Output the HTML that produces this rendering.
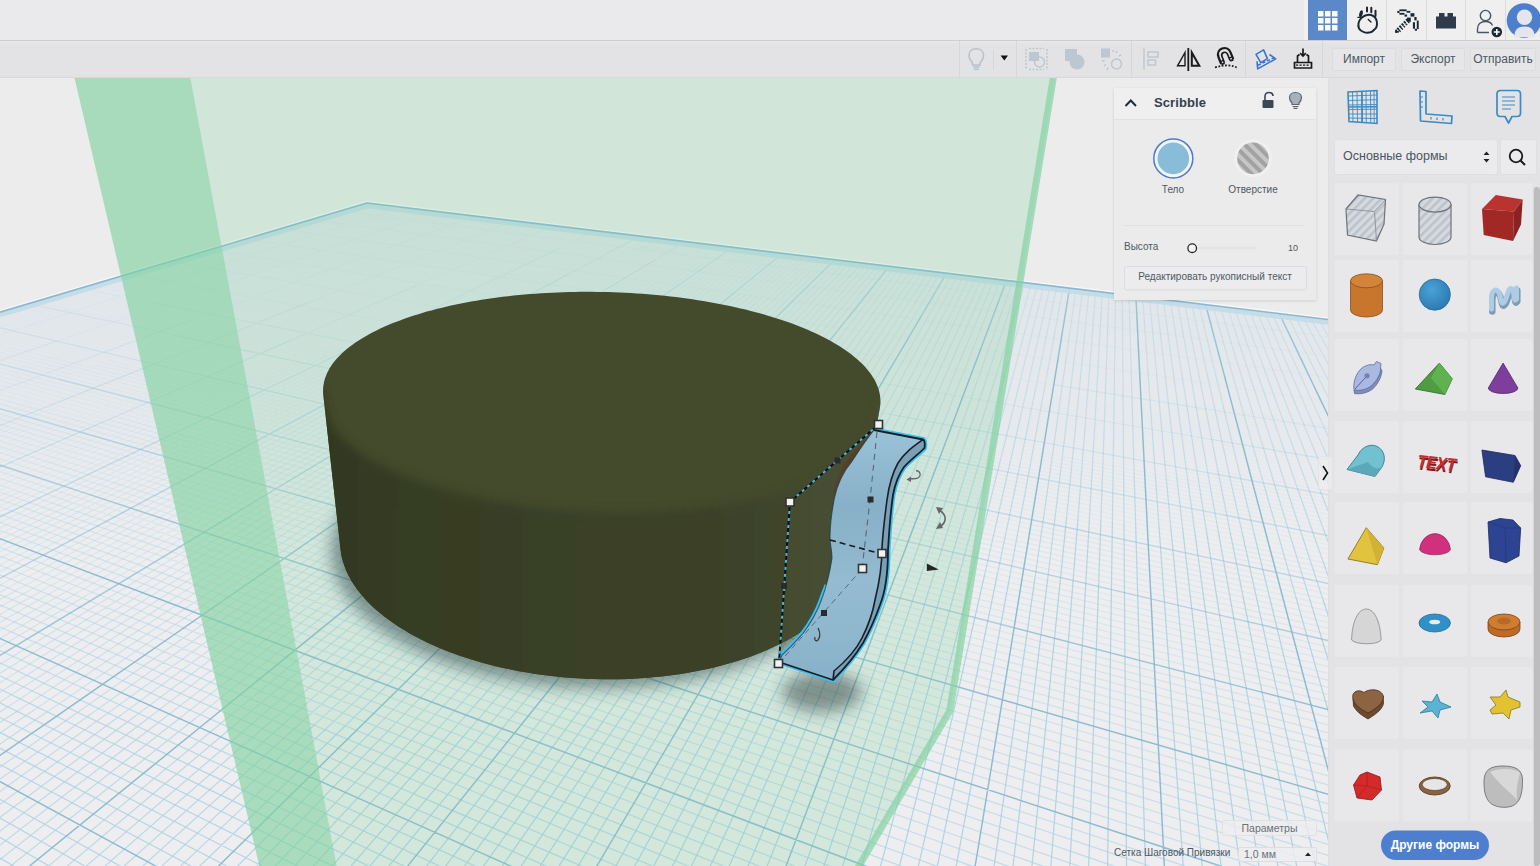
<!DOCTYPE html>
<html><head><meta charset="utf-8">
<style>
*{box-sizing:border-box;margin:0;padding:0}
html,body{width:1540px;height:866px;overflow:hidden;background:#ececec;font-family:"Liberation Sans",sans-serif}
#scene{position:absolute;left:0;top:0}
.abs{position:absolute}
#topbar{position:absolute;left:0;top:0;width:1540px;height:41px;background:#eaeaec;border-bottom:1px solid #cdced2}
#toolbar{position:absolute;left:0;top:41px;width:1540px;height:37px;background:#e3e3e5;box-shadow:inset 0 2px 0 #e7e7e9, inset 0 -1px 0 #d8d8dc}
#panel{position:absolute;left:1328px;top:78px;width:212px;height:788px;background:#e3e3e5}
.tsep{position:absolute;top:44px;width:1px;height:31px;background:#d6d6d9}
.tbtn{position:absolute;top:7px;height:23px;border:1px solid #dcdcdf;background:#e6e6e8;border-radius:2px;color:#4c5866;font-size:12px;text-align:center;line-height:21px}
.tile{position:absolute;width:64px;height:72px;background:#ebebed;border-radius:2px}
#insp{position:absolute;left:1114px;top:88px;width:202px;height:212px;background:#ebebeb;box-shadow:0 1px 3px rgba(0,0,0,0.12)}
.lbl{position:absolute;font-size:10px;color:#4f5963;white-space:nowrap}
</style></head><body>
<svg id="scene" width="1540" height="866" viewBox="0 0 1540 866">
<defs>
  <clipPath id="vp"><rect x="0" y="78" width="1328" height="788"/></clipPath>
  <filter id="blur8" x="-50%" y="-50%" width="200%" height="200%"><feGaussianBlur stdDeviation="8"/></filter>
  <filter id="blur4" x="-50%" y="-50%" width="200%" height="200%"><feGaussianBlur stdDeviation="4"/></filter>
  <filter id="blur2" x="-50%" y="-50%" width="200%" height="200%"><feGaussianBlur stdDeviation="1.5"/></filter>
  <linearGradient id="topg" x1="0" y1="0" x2="0" y2="1">
    <stop offset="0" stop-color="#43472b"/>
    <stop offset="1" stop-color="#464c2e"/>
  </linearGradient>
  <linearGradient id="sideg" gradientUnits="userSpaceOnUse" x1="323" y1="0" x2="880" y2="0">
    <stop offset="0" stop-color="#31371f"/>
    <stop offset="0.1" stop-color="#353b22"/>
    <stop offset="0.4" stop-color="#393f26"/>
    <stop offset="0.7" stop-color="#3b4128"/>
    <stop offset="0.85" stop-color="#40462c"/>
    <stop offset="1" stop-color="#484e32"/>
  </linearGradient>
  <linearGradient id="scribg" gradientUnits="userSpaceOnUse" x1="0" y1="430" x2="0" y2="680">
    <stop offset="0" stop-color="#9cc3d8"/>
    <stop offset="0.12" stop-color="#92bbd1"/>
    <stop offset="0.3" stop-color="#88b1c9"/>
    <stop offset="0.45" stop-color="#8cb4cb"/>
    <stop offset="0.6" stop-color="#94bbd1"/>
    <stop offset="0.8" stop-color="#8fb7ce"/>
    <stop offset="1" stop-color="#88b0c8"/>
  </linearGradient>
  <linearGradient id="fartint" gradientUnits="userSpaceOnUse" x1="0" y1="203" x2="0" y2="560">
    <stop offset="0" stop-color="rgb(170,200,212)" stop-opacity="0.26"/>
    <stop offset="1" stop-color="rgb(170,200,212)" stop-opacity="0"/>
  </linearGradient>
  <clipPath id="cylclip"><path d="M323.1,392.2 L323.1,389.4 L323.3,386.6 L323.7,383.9 L324.2,381.2 L325.0,378.5 L325.9,375.9 L327.0,373.3 L328.3,370.7 L329.7,368.1 L331.4,365.6 L333.1,363.1 L335.0,360.7 L337.1,358.3 L339.3,355.9 L341.7,353.6 L344.2,351.3 L346.8,349.1 L349.6,346.8 L352.5,344.7 L355.5,342.5 L358.7,340.5 L361.9,338.4 L365.3,336.4 L368.7,334.5 L372.3,332.5 L376.0,330.7 L379.8,328.8 L383.6,327.1 L387.6,325.3 L391.6,323.6 L395.8,322.0 L400.0,320.4 L404.3,318.8 L408.7,317.3 L413.1,315.8 L417.6,314.4 L422.2,313.0 L426.8,311.6 L431.6,310.4 L436.3,309.1 L441.2,307.9 L446.0,306.7 L451.0,305.6 L456.0,304.5 L461.0,303.5 L466.1,302.5 L471.2,301.6 L476.4,300.7 L481.6,299.8 L486.9,299.0 L492.1,298.2 L497.5,297.5 L502.8,296.8 L508.2,296.2 L513.6,295.6 L519.1,295.1 L524.5,294.5 L530.0,294.1 L535.5,293.7 L541.1,293.3 L546.6,293.0 L552.2,292.7 L557.8,292.4 L563.4,292.2 L569.0,292.0 L574.6,291.9 L580.2,291.8 L585.9,291.8 L591.5,291.8 L597.2,291.9 L602.8,292.0 L608.5,292.1 L614.1,292.3 L619.8,292.5 L625.4,292.8 L631.1,293.1 L636.7,293.4 L642.4,293.8 L648.0,294.3 L653.6,294.7 L659.2,295.3 L664.8,295.8 L670.4,296.5 L675.9,297.1 L681.4,297.8 L686.9,298.5 L692.4,299.3 L697.9,300.2 L703.3,301.0 L708.7,302.0 L714.1,302.9 L719.4,303.9 L724.7,305.0 L730.0,306.1 L735.2,307.2 L740.4,308.4 L745.6,309.6 L750.7,310.9 L755.7,312.2 L760.7,313.5 L765.6,314.9 L770.5,316.4 L775.3,317.9 L780.1,319.4 L784.8,321.0 L789.4,322.6 L794.0,324.3 L798.4,326.0 L802.8,327.8 L807.2,329.6 L811.4,331.4 L815.6,333.3 L819.6,335.2 L823.6,337.2 L827.5,339.2 L831.2,341.3 L834.9,343.4 L838.4,345.6 L841.9,347.7 L845.2,350.0 L848.4,352.2 L851.5,354.5 L854.4,356.9 L857.2,359.3 L859.9,361.7 L862.4,364.1 L864.8,366.6 L867.1,369.2 L869.1,371.7 L871.0,374.3 L872.8,377.0 L874.4,379.6 L875.8,382.3 L877.0,385.0 L878.1,387.7 L878.9,390.5 L879.6,393.3 L880.1,396.1 L880.3,398.9 L880.4,401.8 L880.3,404.6 L879.9,407.5 L852.1,565.1 L851.4,568.7 L850.5,572.3 L849.3,575.9 L848.0,579.6 L846.5,583.2 L844.7,586.8 L842.8,590.4 L840.6,594.0 L838.2,597.5 L835.6,601.1 L832.7,604.6 L829.7,608.1 L826.4,611.6 L822.9,615.0 L819.1,618.4 L815.2,621.7 L811.0,625.0 L806.6,628.2 L802.0,631.4 L797.1,634.5 L792.0,637.5 L786.8,640.4 L781.3,643.3 L775.6,646.1 L769.7,648.8 L763.6,651.4 L757.3,654.0 L750.9,656.4 L744.2,658.7 L737.4,660.9 L730.4,663.0 L723.2,665.0 L715.9,666.9 L708.5,668.7 L700.9,670.3 L693.1,671.8 L685.3,673.2 L677.3,674.4 L669.3,675.5 L661.1,676.5 L652.9,677.3 L644.6,678.0 L636.3,678.5 L627.9,678.9 L619.4,679.2 L611.0,679.3 L602.5,679.3 L594.0,679.1 L585.5,678.8 L577.0,678.3 L568.6,677.7 L560.2,677.0 L551.8,676.1 L543.5,675.1 L535.3,673.9 L527.1,672.6 L519.1,671.2 L511.1,669.6 L503.3,668.0 L495.6,666.2 L488.0,664.2 L480.5,662.2 L473.2,660.1 L466.0,657.8 L459.0,655.4 L452.2,653.0 L445.5,650.4 L439.0,647.7 L432.7,645.0 L426.6,642.2 L420.7,639.3 L414.9,636.3 L409.4,633.2 L404.1,630.1 L399.0,626.9 L394.0,623.6 L389.4,620.3 L384.9,617.0 L380.6,613.6 L376.6,610.2 L372.7,606.7 L369.1,603.2 L365.7,599.7 L362.6,596.1 L359.6,592.5 L356.9,588.9 L354.3,585.3 L352.0,581.7 L349.9,578.1 L348.0,574.5 L346.3,570.8 L344.9,567.2 L343.6,563.6 L342.5,560.0 L341.6,556.4 L341.0,552.8 L340.5,549.3 L323.3,395.0 Z"/></clipPath>
  <filter id="blur3" x="-20%" y="-20%" width="140%" height="140%"><feGaussianBlur stdDeviation="5"/></filter>
</defs>
<g clip-path="url(#vp)">
  <rect x="0" y="78" width="1328" height="788" fill="#ececec"/>
  <polygon points="0,312.2 367,203 1328,319.5 1328,866 0,866" fill="#eeeef0"/>
  <polygon points="0,312.2 367,203 1328,319.5 1328,866 0,866" fill="url(#fartint)"/>
  <path d="M80.3 346.6L-28 384.9M85 347.7L-23.1 386.2M89.7 348.8L-18.2 387.6M94.5 349.9L-13.3 388.9M99.3 351.1L-8.4 390.3M109 353.4L1.6 393.1M1.6 393.1L-131.3 442.3M113.9 354.5L6.7 394.5M6.7 394.5L-126.1 444.1M118.8 355.7L11.7 396M11.7 396L-121 445.9M211.8 323.5L123.8 356.8M123.8 356.8L16.9 397.4M16.9 397.4L-115.7 447.7M216.6 324.4L128.8 358M128.8 358L22 398.8M22 398.8L-110.5 449.5M221.4 325.4L133.8 359.2M133.8 359.2L27.2 400.3M27.2 400.3L-105.2 451.3M226.2 326.4L138.8 360.4M138.8 360.4L32.4 401.7M231.1 327.4L143.9 361.6M143.9 361.6L37.7 403.2M236 328.4L149 362.8M149 362.8L43 404.7M245.9 330.4L159.3 365.2M159.3 365.2L53.7 407.7M250.9 331.4L164.5 366.4M164.5 366.4L59.1 409.2M327.7 303.1L255.9 332.4M255.9 332.4L169.8 367.7M169.8 367.7L64.6 410.7M332.5 303.9L261 333.5M261 333.5L175.1 368.9M175.1 368.9L70.1 412.3M337.4 304.8L266 334.5M266 334.5L180.4 370.2M180.4 370.2L75.6 413.8M342.3 305.7L271.1 335.5M271.1 335.5L185.7 371.4M185.7 371.4L81.1 415.4M347.2 306.6L276.3 336.6M276.3 336.6L191.1 372.7M352.1 307.4L281.4 337.6M281.4 337.6L196.5 374M357 308.3L286.6 338.7M286.6 338.7L201.9 375.3M425.9 284.2L367 310.1M367 310.1L297.1 340.8M297.1 340.8L212.9 377.9M430.7 285L372 311M372 311L302.4 341.9M302.4 341.9L218.5 379.2M435.5 285.7L377.1 311.9M377.1 311.9L307.7 343M307.7 343L224.1 380.5M440.4 286.5L382.2 312.8M382.2 312.8L313.1 344.1M313.1 344.1L229.7 381.8M445.2 287.3L387.3 313.7M387.3 313.7L318.5 345.2M318.5 345.2L235.4 383.1M450.1 288.1L392.4 314.7M392.4 314.7L323.9 346.3M323.9 346.3L241.1 384.5M455 288.8L397.6 315.6M397.6 315.6L329.3 347.4M459.9 289.6L402.8 316.5M402.8 316.5L334.8 348.5M513.3 267.4L464.9 290.4M464.9 290.4L408 317.5M408 317.5L340.3 349.6M523 268.7L475.2 291.9M475.2 291.9L419.1 319.1M419.1 319.1L352.2 351.5M528 269.2L480.6 292.5M480.6 292.5L425 319.7M425 319.7L358.8 352.2M533 269.8L486.1 293.1M486.1 293.1L431 320.4M431 320.4L365.4 352.9M538.1 270.4L491.6 293.7M491.6 293.7L437 321M437 321L372.1 353.5M543.1 271L497.1 294.3M497.1 294.3L443 321.6M587.6 251.4L548.2 271.6M548.2 271.6L502.6 294.9M502.6 294.9L449.1 322.3M592.3 252L553.3 272.2M553.3 272.2L508.2 295.5M508.2 295.5L455.2 322.9M597 252.6L558.5 272.7M558.5 272.7L513.7 296.1M513.7 296.1L461.3 323.6M601.8 253.1L563.6 273.3M563.6 273.3L519.3 296.8M519.3 296.8L467.4 324.2M611.4 254.3L574 274.5M574 274.5L530.6 298M530.6 298L479.7 325.5M648.5 237.1L616.2 254.8M616.2 254.8L579.2 275.1M579.2 275.1L536.2 298.6M536.2 298.6L485.9 326.2M653 237.7L621.1 255.4M621.1 255.4L584.4 275.7M584.4 275.7L541.9 299.3M541.9 299.3L492.1 326.9M657.6 238.2L625.9 256M625.9 256L589.6 276.3M589.6 276.3L547.6 299.9M662.1 238.8L630.8 256.6M630.8 256.6L594.9 276.9M594.9 276.9L553.3 300.5M666.7 239.3L635.7 257.1M635.7 257.1L600.2 277.5M600.2 277.5L559.1 301.2M671.3 239.9L640.7 257.7M640.7 257.7L605.5 278.1M605.5 278.1L564.8 301.8M675.9 240.5L645.6 258.3M645.6 258.3L610.9 278.8M610.9 278.8L570.6 302.4M680.5 241L650.6 258.9M650.6 258.9L616.2 279.4M616.2 279.4L576.4 303.1M689.9 242.2L660.6 260.1M660.6 260.1L627 280.6M694.6 242.7L665.6 260.7M665.6 260.7L632.4 281.2M699.3 243.3L670.7 261.3M670.7 261.3L637.9 281.9M704 243.9L675.7 261.9M675.7 261.9L643.4 282.5M708.8 244.4L680.8 262.5M680.8 262.5L648.9 283.1M713.5 245L686 263.1M686 263.1L654.4 283.8M718.3 245.6L691.1 263.7M723.2 246.2L696.3 264.3M728 246.8L701.5 264.9M737.7 248L711.9 266.1M742.6 248.6L717.1 266.8M1202 405.7L1368.1 432.2M1203.1 411.4L1371.6 438.6M1203.6 414.3L1373.4 441.8M1204.2 417.2L1375.2 445.2M1052.1 395.1L1204.8 420.2M1204.8 420.2L1377.1 448.5M1051.6 397.8L1205.3 423.2M1205.3 423.2L1378.9 451.9M1051.2 400.5L1205.9 426.3M1205.9 426.3L1380.8 455.4M1050.7 403.3L1206.5 429.4M1206.5 429.4L1382.8 458.9M910.7 382.5L1050.3 406.1M1050.3 406.1L1207.1 432.5M1207.1 432.5L1384.7 462.5M909.4 385L1049.8 408.9M1049.8 408.9L1207.7 435.7M1207.7 435.7L1386.7 466.1M906.8 390.2L1048.9 414.6M1048.9 414.6L1209 442.2M1209 442.2L1390.8 473.5M905.4 392.8L1048.4 417.6M1048.4 417.6L1209.6 445.6M1209.6 445.6L1392.8 477.3M775.6 373L904 395.4M904 395.4L1047.9 420.6M1047.9 420.6L1210.3 448.9M1210.3 448.9L1394.9 481.2M773.5 375.4L902.6 398.1M902.6 398.1L1047.4 423.6M1047.4 423.6L1210.9 452.3M1210.9 452.3L1397.1 485.1M771.4 377.8L901.2 400.8M901.2 400.8L1046.9 426.6M1046.9 426.6L1211.6 455.8M1211.6 455.8L1399.3 489.1M769.3 380.3L899.8 403.6M899.8 403.6L1046.4 429.8M1046.4 429.8L1212.3 459.3M1212.3 459.3L1401.5 493.1M649.5 361.7L767.1 382.8M767.1 382.8L898.3 406.4M898.3 406.4L1045.9 432.9M1045.9 432.9L1213 462.9M1213 462.9L1403.7 497.2M646.8 363.9L764.9 385.3M764.9 385.3L896.9 409.2M896.9 409.2L1045.4 436.1M1045.4 436.1L1213.7 466.6M1213.7 466.6L1406 501.4M643.9 366.2L762.6 387.9M762.6 387.9L895.4 412.1M895.4 412.1L1044.8 439.3M1044.8 439.3L1214.4 470.2M530.5 351L638.2 370.9M638.2 370.9L758.1 393.1M758.1 393.1L892.4 417.9M892.4 417.9L1043.8 445.9M1043.8 445.9L1215.8 477.8M527.1 353.1L635.3 373.3M635.3 373.3L755.8 395.7M755.8 395.7L890.8 420.9M890.8 420.9L1043.2 449.3M1043.2 449.3L1216.6 481.6M523.7 355.3L632.3 375.7M632.3 375.7L753.4 398.4M753.4 398.4L889.2 423.9M889.2 423.9L1042.7 452.8M520.2 357.5L629.3 378.1M629.3 378.1L751 401.2M751 401.2L887.6 427M887.6 427L1042.1 456.2M417.9 340.9L516.7 359.7M516.7 359.7L626.3 380.6M626.3 380.6L748.6 403.9M748.6 403.9L886 430.1M886 430.1L1041.5 459.8M414 342.9L513.1 361.9M513.1 361.9L623.2 383.1M623.2 383.1L746.2 406.7M746.2 406.7L884.4 433.3M884.4 433.3L1040.9 463.3M410 344.9L509.5 364.2M509.5 364.2L620.1 385.6M620.1 385.6L743.7 409.6M743.7 409.6L882.7 436.5M882.7 436.5L1040.3 467M406 347L505.9 366.5M505.9 366.5L617 388.2M617 388.2L741.2 412.4M741.2 412.4L881.1 439.7M311.3 331.3L401.9 349.1M401.9 349.1L502.2 368.8M502.2 368.8L613.8 390.8M613.8 390.8L738.6 415.3M738.6 415.3L879.4 443M302.5 335.2L393.7 353.4M393.7 353.4L494.7 373.6M494.7 373.6L607.3 396.1M607.3 396.1L733.5 421.3M733.5 421.3L875.9 449.7M215 320.4L297.9 337.1M297.9 337.1L389.5 355.5M389.5 355.5L490.9 376M490.9 376L604 398.8M604 398.8L730.8 424.3M210.2 322.2L293.4 339.1M293.4 339.1L385.2 357.7M385.2 357.7L487 378.4M487 378.4L600.6 401.5M600.6 401.5L728.1 427.4M205.4 324L288.8 341.1M288.8 341.1L380.9 360M380.9 360L483.1 380.9M483.1 380.9L597.2 404.2M597.2 404.2L725.4 430.5M200.5 325.9L284.1 343.1M284.1 343.1L376.5 362.2M376.5 362.2L479.1 383.4M479.1 383.4L593.8 407M593.8 407L722.6 433.6M119.3 311.9L195.6 327.7M195.6 327.7L279.4 345.2M279.4 345.2L372.1 364.5M372.1 364.5L475.1 385.9M475.1 385.9L590.3 409.9M114.2 313.6L190.6 329.6M190.6 329.6L274.7 347.3M274.7 347.3L367.7 366.8M367.7 366.8L471.1 388.5M471.1 388.5L586.7 412.8M109 315.3L185.5 331.5M185.5 331.5L269.8 349.4M269.8 349.4L363.1 369.1M363.1 369.1L467 391.1M467 391.1L583.2 415.7M33.8 302.1L103.7 317.1M103.7 317.1L180.4 333.4M180.4 333.4L265 351.5M265 351.5L358.6 371.5M358.6 371.5L462.8 393.7M462.8 393.7L579.5 418.6M22.8 305.4L93 320.6M93 320.6L170.1 337.3M170.1 337.3L255 355.8M255 355.8L349.3 376.3M349.3 376.3L454.3 399.1M17.3 307L87.6 322.4M87.6 322.4L164.8 339.3M164.8 339.3L250 358M250 358L344.5 378.7M344.5 378.7L450 401.8M11.7 308.7L82.1 324.2M82.1 324.2L159.5 341.3M159.5 341.3L244.9 360.2M244.9 360.2L339.7 381.2M339.7 381.2L445.6 404.6M6.1 310.4L76.6 326.1M76.6 326.1L154.1 343.4M154.1 343.4L239.7 362.5M239.7 362.5L334.9 383.7M0.4 312.1L71 328M71 328L148.6 345.4M148.6 345.4L234.5 364.8M234.5 364.8L329.9 386.2M-5.4 313.8L65.3 329.8M65.3 329.8L143.1 347.5M143.1 347.5L229.2 367.1M229.2 367.1L325 388.8M-11.2 315.5L59.6 331.7M59.6 331.7L137.6 349.6M137.6 349.6L223.9 369.4M223.9 369.4L319.9 391.4M-17.1 317.3L53.8 333.7M53.8 333.7L131.9 351.7M131.9 351.7L218.5 371.7M-23.1 319L47.9 335.6M47.9 335.6L126.2 353.9M126.2 353.9L213 374.1M-35.2 322.6L36 339.6M36 339.6L114.6 358.3M114.6 358.3L201.8 379M-41.3 324.5L30 341.6M30 341.6L108.7 360.5M-47.5 326.3L23.9 343.6M23.9 343.6L102.8 362.7M-53.8 328.2L17.7 345.7M17.7 345.7L96.7 365M-60.1 330.1L11.4 347.8M-66.5 332L5.1 349.9M-73 333.9L-1.3 352" stroke="#acd2e3" stroke-width="1.2" fill="none" opacity="0.04"/>
<path d="M32.4 401.7L-99.8 453.1M37.7 403.2L-94.4 455M43 404.7L-89 456.9M53.7 407.7L-78 460.6M59.1 409.2L-72.5 462.5M64.6 410.7L-66.9 464.5M70.1 412.3L-61.2 466.4M75.6 413.8L-55.5 468.4M81.1 415.4L-49.8 470.3M191.1 372.7L86.8 416.9M86.8 416.9L-44 472.3M196.5 374L92.4 418.5M92.4 418.5L-38.1 474.3M201.9 375.3L98.1 420.1M98.1 420.1L-32.3 476.4M212.9 377.9L109.6 423.3M109.6 423.3L-20.4 480.4M218.5 379.2L115.4 424.9M115.4 424.9L-14.3 482.5M224.1 380.5L121.3 426.6M121.3 426.6L-8.3 484.6M229.7 381.8L127.2 428.2M127.2 428.2L-2.1 486.7M235.4 383.1L133.1 429.9M133.1 429.9L4.1 488.8M241.1 384.5L139.1 431.5M139.1 431.5L10.3 491M329.3 347.4L246.8 385.8M246.8 385.8L145.1 433.2M145.1 433.2L16.6 493.1M334.8 348.5L252.6 387.2M252.6 387.2L151.2 434.9M151.2 434.9L22.9 495.3M340.3 349.6L258.4 388.6M258.4 388.6L157.3 436.6M352.2 351.5L271.3 390.8M271.3 390.8L171.4 439.3M358.8 352.2L278.7 391.5M278.7 391.5L179.7 440M365.4 352.9L286.1 392.2M286.1 392.2L188.1 440.7M372.1 353.5L293.5 392.9M293.5 392.9L196.4 441.5M443 321.6L378.7 354.2M378.7 354.2L300.9 393.6M300.9 393.6L204.9 442.2M449.1 322.3L385.4 354.9M385.4 354.9L308.4 394.3M308.4 394.3L213.3 442.9M455.2 322.9L392.1 355.6M392.1 355.6L315.9 395M315.9 395L221.8 443.7M461.3 323.6L398.8 356.2M398.8 356.2L323.4 395.7M323.4 395.7L230.3 444.4M467.4 324.2L405.6 356.9M405.6 356.9L330.9 396.4M330.9 396.4L238.8 445.2M479.7 325.5L419.2 358.3M419.2 358.3L346.1 397.9M485.9 326.2L426 359M426 359L353.7 398.6M492.1 326.9L432.9 359.7M432.9 359.7L361.3 399.3M547.6 299.9L498.3 327.5M498.3 327.5L439.7 360.4M439.7 360.4L369 400M553.3 300.5L504.6 328.2M504.6 328.2L446.6 361.1M446.6 361.1L376.7 400.8M559.1 301.2L510.9 328.9M510.9 328.9L453.6 361.8M453.6 361.8L384.4 401.5M564.8 301.8L517.2 329.5M517.2 329.5L460.5 362.5M460.5 362.5L392.2 402.2M570.6 302.4L523.5 330.2M523.5 330.2L467.5 363.2M467.5 363.2L399.9 403M576.4 303.1L529.9 330.9M529.9 330.9L474.5 363.9M627 280.6L588.1 304.4M588.1 304.4L542.6 332.2M542.6 332.2L488.6 365.3M632.4 281.2L594 305M594 305L549.1 332.9M549.1 332.9L495.7 366M637.9 281.9L599.9 305.7M599.9 305.7L555.5 333.6M555.5 333.6L502.8 366.7M643.4 282.5L605.9 306.4M605.9 306.4L562 334.3M562 334.3L509.9 367.4M648.9 283.1L611.8 307M611.8 307L568.5 335M568.5 335L517.1 368.2M654.4 283.8L617.8 307.7M617.8 307.7L575 335.7M575 335.7L524.3 368.9M691.1 263.7L659.9 284.4M659.9 284.4L623.8 308.3M623.8 308.3L581.6 336.4M581.6 336.4L531.5 369.6M696.3 264.3L665.5 285M665.5 285L629.8 309M629.8 309L588.2 337.1M701.5 264.9L671.1 285.7M671.1 285.7L635.9 309.7M635.9 309.7L594.8 337.8M711.9 266.1L682.3 287M682.3 287L648.1 311M648.1 311L608.1 339.2M717.1 266.8L688 287.6M688 287.6L654.2 311.7M654.2 311.7L614.8 339.9M747.6 249.2L722.4 267.4M722.4 267.4L693.6 288.3M693.6 288.3L660.4 312.4M660.4 312.4L621.5 340.6M752.5 249.8L727.7 268M727.7 268L699.3 288.9M699.3 288.9L666.5 313.1M666.5 313.1L628.2 341.3M757.5 250.4L733 268.6M733 268.6L705.1 289.6M705.1 289.6L672.8 313.8M762.5 251L738.4 269.3M738.4 269.3L710.8 290.2M710.8 290.2L679 314.5M767.5 251.6L743.8 269.9M743.8 269.9L716.6 290.9M716.6 290.9L685.2 315.2M772.5 252.2L749.1 270.5M749.1 270.5L722.4 291.6M722.4 291.6L691.5 315.9M777.6 252.8L754.6 271.2M754.6 271.2L728.2 292.2M728.2 292.2L697.8 316.6M787.8 254L765.5 272.5M765.5 272.5L740 293.6M792.9 254.6L770.9 273.1M770.9 273.1L745.9 294.3M798 255.3L776.5 273.8M776.5 273.8L751.8 294.9M803.2 255.9L782 274.4M782 274.4L757.8 295.6M808.4 256.5L787.6 275.1M787.6 275.1L763.7 296.3M813.6 257.2L793.1 275.8M793.1 275.8L769.7 297M818.9 257.8L798.8 276.4M824.1 258.4L804.4 277.1M829.4 259.1L810.1 277.8M840.1 260.4L821.5 279.1M1214.4 470.2L1408.3 505.6M1215.8 477.8L1413.1 514.3M1216.6 481.6L1415.5 518.7M1042.7 452.8L1217.3 485.6M1217.3 485.6L1418 523.2M1042.1 456.2L1218.1 489.5M1218.1 489.5L1420.5 527.8M1041.5 459.8L1218.9 493.6M1218.9 493.6L1423 532.5M1040.9 463.3L1219.6 497.7M1219.6 497.7L1425.6 537.3M1040.3 467L1220.4 501.9M1220.4 501.9L1428.3 542.1M881.1 439.7L1039.7 470.7M1039.7 470.7L1221.3 506.1M1221.3 506.1L1431 547M879.4 443L1039.1 474.4M1039.1 474.4L1222.1 510.4M1222.1 510.4L1433.7 552M875.9 449.7L1037.9 482.1M1037.9 482.1L1223.8 519.2M1223.8 519.2L1439.4 562.3M730.8 424.3L874.1 453.2M874.1 453.2L1037.2 486M1037.2 486L1224.7 523.8M1224.7 523.8L1442.3 567.6M728.1 427.4L872.3 456.6M872.3 456.6L1036.6 490M1036.6 490L1225.5 528.4M1225.5 528.4L1445.2 573M725.4 430.5L870.4 460.2M870.4 460.2L1035.9 494.1M1035.9 494.1L1226.4 533.1M1226.4 533.1L1448.2 578.5M722.6 433.6L868.6 463.8M868.6 463.8L1035.2 498.2M1035.2 498.2L1227.4 537.8M1227.4 537.8L1451.3 584M590.3 409.9L719.8 436.9M719.8 436.9L866.7 467.4M866.7 467.4L1034.6 502.4M1034.6 502.4L1228.3 542.7M586.7 412.8L717 440.1M717 440.1L864.8 471.1M864.8 471.1L1033.9 506.6M1033.9 506.6L1229.2 547.6M583.2 415.7L714.1 443.4M714.1 443.4L862.8 474.9M862.8 474.9L1033.2 510.9M1033.2 510.9L1230.2 552.6M579.5 418.6L711.2 446.7M711.2 446.7L860.8 478.7M860.8 478.7L1032.4 515.3M1032.4 515.3L1231.2 557.7M454.3 399.1L572.1 424.7M572.1 424.7L705.2 453.6M705.2 453.6L856.8 486.5M856.8 486.5L1031 524.3M450 401.8L568.3 427.7M568.3 427.7L702.2 457.1M702.2 457.1L854.7 490.5M854.7 490.5L1030.2 528.9M445.6 404.6L564.5 430.9M564.5 430.9L699.1 460.6M699.1 460.6L852.6 494.5M852.6 494.5L1029.5 533.6M334.9 383.7L441.1 407.4M441.1 407.4L560.6 434M560.6 434L695.9 464.2M695.9 464.2L850.5 498.7M850.5 498.7L1028.7 538.4M329.9 386.2L436.6 410.2M436.6 410.2L556.7 437.2M556.7 437.2L692.7 467.8M692.7 467.8L848.3 502.9M325 388.8L432.1 413.1M432.1 413.1L552.7 440.5M552.7 440.5L689.5 471.6M689.5 471.6L846.1 507.1M319.9 391.4L427.4 416M427.4 416L548.6 443.8M548.6 443.8L686.2 475.3M686.2 475.3L843.9 511.4M218.5 371.7L314.8 394M314.8 394L422.7 419M422.7 419L544.5 447.1M544.5 447.1L682.9 479.1M682.9 479.1L841.6 515.8M213 374.1L309.6 396.7M309.6 396.7L418 422M418 422L540.3 450.5M540.3 450.5L679.5 483M201.8 379L299.1 402.1M299.1 402.1L408.3 428.1M408.3 428.1L531.8 457.5M531.8 457.5L672.5 491M108.7 360.5L196.1 381.5M196.1 381.5L293.7 404.9M293.7 404.9L403.3 431.2M403.3 431.2L527.4 461M527.4 461L669 495M102.8 362.7L190.4 384M190.4 384L288.2 407.7M288.2 407.7L398.3 434.4M398.3 434.4L523 464.6M96.7 365L184.5 386.5M184.5 386.5L282.7 410.6M282.7 410.6L393.2 437.6M393.2 437.6L518.5 468.3M11.4 347.8L90.6 367.3M90.6 367.3L178.6 389.1M178.6 389.1L277.1 413.4M277.1 413.4L388 440.9M388 440.9L513.9 472M5.1 349.9L84.4 369.7M84.4 369.7L172.7 391.7M172.7 391.7L271.4 416.4M271.4 416.4L382.8 444.2M382.8 444.2L509.3 475.8M-1.3 352L78.1 372M78.1 372L166.6 394.3M166.6 394.3L265.7 419.3M265.7 419.3L377.5 447.5M-7.8 354.1L71.8 374.4M71.8 374.4L160.5 397M160.5 397L259.9 422.3M259.9 422.3L372.1 450.9M-14.3 356.3L65.4 376.8M65.4 376.8L154.3 399.7M154.3 399.7L254 425.4M254 425.4L366.6 454.4M-27.6 360.8L52.3 381.8M52.3 381.8L141.6 405.2M141.6 405.2L241.9 431.6M-34.4 363L45.7 384.3M45.7 384.3L135.1 408M135.1 408L235.7 434.8M-41.3 365.3L38.9 386.8M38.9 386.8L128.6 410.9M128.6 410.9L229.5 438M-48.2 367.6L32.1 389.4M32.1 389.4L121.9 413.8M121.9 413.8L223.2 441.3M-55.3 369.9L25.2 392M25.2 392L115.2 416.7M-62.4 372.3L18.2 394.7M18.2 394.7L108.4 419.7M-69.6 374.7L11.1 397.3M11.1 397.3L101.5 422.7M-76.9 377.1L3.9 400M-84.2 379.6L-3.4 402.8" stroke="#acd2e3" stroke-width="1.2" fill="none" opacity="0.12"/>
<path d="M-2.1 486.7L-170.1 562.7M4.1 488.8L-163.8 565.5M10.3 491L-157.5 568.4M16.6 493.1L-151 571.2M22.9 495.3L-144.5 574.1M157.3 436.6L29.3 497.5M29.3 497.5L-138 577M171.4 439.3L44.7 500.8M44.7 500.8L-121 581.2M179.7 440L54.3 501.5M54.3 501.5L-109.7 581.9M188.1 440.7L63.9 502.3M63.9 502.3L-98.4 582.7M196.4 441.5L73.6 503M204.9 442.2L83.3 503.8M213.3 442.9L93 504.5M221.8 443.7L102.7 505.3M230.3 444.4L112.5 506M238.8 445.2L122.3 506.8M346.1 397.9L255.9 446.7M255.9 446.7L142 508.3M353.7 398.6L264.5 447.4M264.5 447.4L151.9 509.1M361.3 399.3L273.1 448.2M273.1 448.2L161.8 509.8M369 400L281.8 448.9M281.8 448.9L171.7 510.6M376.7 400.8L290.5 449.7M290.5 449.7L181.7 511.4M384.4 401.5L299.2 450.4M299.2 450.4L191.7 512.2M392.2 402.2L308 451.2M399.9 403L316.7 451.9M474.5 363.9L407.7 403.7M407.7 403.7L325.5 452.7M488.6 365.3L423.4 405.2M423.4 405.2L343.2 454.2M495.7 366L431.3 405.9M431.3 405.9L352.1 455M502.8 366.7L439.2 406.7M439.2 406.7L361 455.8M509.9 367.4L447.1 407.4M447.1 407.4L370 456.6M517.1 368.2L455.1 408.2M455.1 408.2L378.9 457.4M524.3 368.9L463.1 408.9M463.1 408.9L387.9 458.1M531.5 369.6L471.1 409.7M471.1 409.7L397 458.9M588.2 337.1L538.7 370.4M538.7 370.4L479.2 410.5M594.8 337.8L546 371.1M546 371.1L487.3 411.2M608.1 339.2L560.6 372.6M560.6 372.6L503.5 412.8M614.8 339.9L568 373.3M568 373.3L511.7 413.5M621.5 340.6L575.4 374.1M575.4 374.1L519.9 414.3M628.2 341.3L582.8 374.8M582.8 374.8L528.1 415.1M672.8 313.8L635 342.1M635 342.1L590.2 375.6M590.2 375.6L536.4 415.9M679 314.5L641.8 342.8M641.8 342.8L597.7 376.3M685.2 315.2L648.6 343.5M648.6 343.5L605.2 377.1M691.5 315.9L655.4 344.2M655.4 344.2L612.7 377.8M697.8 316.6L662.3 345M662.3 345L620.2 378.6M740 293.6L710.5 318M710.5 318L676.1 346.4M676.1 346.4L635.4 380.1M745.9 294.3L716.9 318.7M716.9 318.7L683.1 347.2M683.1 347.2L643.1 380.9M751.8 294.9L723.3 319.4M723.3 319.4L690.1 347.9M690.1 347.9L650.7 381.7M757.8 295.6L729.8 320.1M729.8 320.1L697.1 348.7M763.7 296.3L736.2 320.8M736.2 320.8L704.1 349.4M769.7 297L742.7 321.5M742.7 321.5L711.2 350.2M798.8 276.4L775.8 297.7M775.8 297.7L749.2 322.3M749.2 322.3L718.3 350.9M804.4 277.1L781.8 298.4M781.8 298.4L755.8 323M755.8 323L725.4 351.7M810.1 277.8L787.9 299.1M787.9 299.1L762.4 323.7M762.4 323.7L732.6 352.4M821.5 279.1L800.2 300.5M800.2 300.5L775.6 325.2M845.4 261L827.2 279.8M827.2 279.8L806.3 301.2M806.3 301.2L782.3 325.9M850.8 261.7L833 280.5M833 280.5L812.5 301.9M812.5 301.9L789 326.7M856.3 262.3L838.7 281.1M838.7 281.1L818.7 302.6M818.7 302.6L795.7 327.4M861.7 263L844.6 281.8M844.6 281.8L825 303.3M825 303.3L802.4 328.1M867.2 263.7L850.4 282.5M850.4 282.5L831.3 304.1M872.7 264.3L856.3 283.2M856.3 283.2L837.6 304.8M878.2 265L862.2 283.9M862.2 283.9L843.9 305.5M883.7 265.7L868.1 284.6M868.1 284.6L850.3 306.2M894.9 267L880 286M880 286L863.1 307.7M900.5 267.7L886 286.7M906.2 268.4L892.1 287.5M911.8 269.1L898.1 288.2M917.5 269.8L904.2 288.9M923.3 270.5L910.3 289.6M1228.3 542.7L1454.4 589.7M1229.2 547.6L1457.5 595.5M1230.2 552.6L1460.8 601.4M1231.2 557.7L1464.1 607.4M1031 524.3L1233.2 568.2M1233.2 568.2L1470.9 619.8M1030.2 528.9L1234.2 573.6M1234.2 573.6L1474.3 626.2M1029.5 533.6L1235.3 579.1M1235.3 579.1L1477.9 632.7M1028.7 538.4L1236.4 584.7M1236.4 584.7L1481.5 639.4M848.3 502.9L1027.9 543.3M1027.9 543.3L1237.5 590.4M1237.5 590.4L1485.3 646.2M846.1 507.1L1027.1 548.2M1027.1 548.2L1238.6 596.2M1238.6 596.2L1489 653.1M843.9 511.4L1026.3 553.2M1026.3 553.2L1239.7 602.1M1239.7 602.1L1492.9 660.1M841.6 515.8L1025.4 558.3M1025.4 558.3L1240.9 608.2M679.5 483L839.3 520.3M839.3 520.3L1024.6 563.6M1024.6 563.6L1242.1 614.3M672.5 491L834.5 529.5M834.5 529.5L1022.8 574.3M1022.8 574.3L1244.5 627M669 495L832.1 534.2M832.1 534.2L1021.9 579.8M523 464.6L665.4 499.2M665.4 499.2L829.6 539M829.6 539L1021 585.4M518.5 468.3L661.7 503.4M661.7 503.4L827.1 543.8M827.1 543.8L1020.1 591.1M513.9 472L658 507.6M658 507.6L824.5 548.8M824.5 548.8L1019.1 596.9M509.3 475.8L654.2 512M654.2 512L821.9 553.8M821.9 553.8L1018.2 602.8M377.5 447.5L504.6 479.6M504.6 479.6L650.3 516.4M650.3 516.4L819.2 559M372.1 450.9L499.8 483.5M499.8 483.5L646.4 520.8M646.4 520.8L816.5 564.2M366.6 454.4L495 487.4M495 487.4L642.4 525.4M642.4 525.4L813.8 569.5M241.9 431.6L355.4 461.4M355.4 461.4L485 495.5M485 495.5L634.3 534.7M235.7 434.8L349.7 465.1M349.7 465.1L479.9 499.6M479.9 499.6L630.1 539.5M229.5 438L343.9 468.7M343.9 468.7L474.8 503.8M474.8 503.8L625.8 544.4M223.2 441.3L338 472.4M338 472.4L469.5 508.1M469.5 508.1L621.5 549.4M115.2 416.7L216.7 444.6M216.7 444.6L332 476.2M332 476.2L464.2 512.5M108.4 419.7L210.2 447.9M210.2 447.9L326 480M326 480L458.7 516.9M101.5 422.7L203.6 451.3M203.6 451.3L319.8 483.9M319.8 483.9L453.2 521.4M3.9 400L94.5 425.7M94.5 425.7L196.9 454.8M196.9 454.8L313.5 487.9M313.5 487.9L447.6 525.9M-3.4 402.8L87.4 428.8M87.4 428.8L190.1 458.3M190.1 458.3L307.2 491.9M-18.2 408.4L72.9 435.2M72.9 435.2L176.2 465.5M176.2 465.5L294.1 500.1M-25.8 411.2L65.5 438.4M65.5 438.4L169 469.2M169 469.2L287.5 504.3M-33.5 414.1L58 441.6M58 441.6L161.8 472.9M-41.3 417.1L50.4 445M50.4 445L154.5 476.7M-49.1 420L42.7 448.3M42.7 448.3L147 480.5M-57.9 422.8L33.4 451.3M33.4 451.3L137.4 483.7M-67.7 425.3L22.7 453.9M-77.5 427.9L11.9 456.5M-87.4 430.5L1 459.2" stroke="#acd2e3" stroke-width="1.2" fill="none" opacity="0.21"/>
<path d="M73.6 503L-87 583.4M83.3 503.8L-75.6 584.2M93 504.5L-64.2 584.9M102.7 505.3L-52.7 585.7M112.5 506L-41.2 586.4M122.3 506.8L-29.7 587.2M142 508.3L-6.6 588.7M151.9 509.1L5 589.5M161.8 509.8L16.7 590.2M171.7 510.6L28.3 591M181.7 511.4L40 591.8M191.7 512.2L51.8 592.5M308 451.2L201.7 512.9M201.7 512.9L63.5 593.3M316.7 451.9L211.8 513.7M211.8 513.7L75.3 594.1M325.5 452.7L221.9 514.5M221.9 514.5L87.1 594.9M343.2 454.2L242.1 516.1M352.1 455L252.3 516.9M361 455.8L262.5 517.7M370 456.6L272.8 518.5M378.9 457.4L283 519.3M387.9 458.1L293.3 520.1M397 458.9L303.7 520.9M479.2 410.5L406 459.7M406 459.7L314 521.7M487.3 411.2L415.1 460.5M415.1 460.5L324.4 522.5M503.5 412.8L433.4 462.1M433.4 462.1L345.3 524.1M511.7 413.5L442.6 462.9M519.9 414.3L451.8 463.7M528.1 415.1L461 464.5M536.4 415.9L470.3 465.3M597.7 376.3L544.6 416.7M544.6 416.7L479.6 466.1M605.2 377.1L553 417.4M553 417.4L488.9 466.9M612.7 377.8L561.3 418.2M561.3 418.2L498.3 467.7M620.2 378.6L569.7 419M569.7 419L507.7 468.6M635.4 380.1L586.5 420.6M643.1 380.9L595 421.4M650.7 381.7L603.5 422.2M697.1 348.7L658.4 382.4M658.4 382.4L612 423M704.1 349.4L666.2 383.2M666.2 383.2L620.6 423.8M711.2 350.2L673.9 384M673.9 384L629.1 424.6M718.3 350.9L681.7 384.8M681.7 384.8L637.8 425.5M725.4 351.7L689.5 385.6M689.5 385.6L646.4 426.3M732.6 352.4L697.4 386.4M775.6 325.2L747 354M747 354L713.1 388M782.3 325.9L754.2 354.7M754.2 354.7L721.1 388.8M789 326.7L761.5 355.5M761.5 355.5L729.1 389.6M795.7 327.4L768.8 356.3M768.8 356.3L737.1 390.4M802.4 328.1L776.1 357.1M776.1 357.1L745.1 391.2M831.3 304.1L809.2 328.9M809.2 328.9L783.5 357.8M783.5 357.8L753.2 392M837.6 304.8L816 329.7M816 329.7L790.9 358.6M843.9 305.5L822.9 330.4M822.9 330.4L798.3 359.4M850.3 306.2L829.7 331.2M829.7 331.2L805.8 360.2M863.1 307.7L843.5 332.7M843.5 332.7L820.8 361.8M886 286.7L869.5 308.5M869.5 308.5L850.5 333.5M850.5 333.5L828.3 362.6M892.1 287.5L876 309.2M876 309.2L857.5 334.3M898.1 288.2L882.5 309.9M882.5 309.9L864.5 335M904.2 288.9L889 310.7M889 310.7L871.5 335.8M910.3 289.6L895.6 311.5M895.6 311.5L878.6 336.6M929 271.2L916.5 290.3M916.5 290.3L902.2 312.2M902.2 312.2L885.7 337.4M934.8 271.9L922.7 291.1M922.7 291.1L908.8 313M908.8 313L892.9 338.2M940.6 272.6L928.9 291.8M928.9 291.8L915.5 313.7M915.5 313.7L900 339M952.3 274L941.4 293.3M941.4 293.3L928.9 315.3M958.2 274.7L947.7 294M947.7 294L935.6 316M964.2 275.4L954 294.8M954 294.8L942.4 316.8M970.1 276.1L960.3 295.5M960.3 295.5L949.2 317.6M976.1 276.9L966.7 296.3M966.7 296.3L956 318.4M982.1 277.6L973.1 297M988.2 278.3L979.6 297.8M994.2 279.1L986.1 298.6M1000.3 279.8L992.6 299.3M1012.6 281.3L1005.7 300.9M1240.9 608.2L1496.9 667.4M1242.1 614.3L1500.9 674.7M1244.5 627L1509.2 690M1021.9 579.8L1245.7 633.5M1245.7 633.5L1513.5 697.8M1021 585.4L1247 640.2M1247 640.2L1517.9 705.9M1020.1 591.1L1248.3 647M1248.3 647L1522.4 714.1M1019.1 596.9L1249.7 653.9M1249.7 653.9L1527 722.5M1018.2 602.8L1251 661M819.2 559L1017.2 608.9M1017.2 608.9L1252.4 668.2M816.5 564.2L1016.2 615M1016.2 615L1253.8 675.6M813.8 569.5L1015.1 621.3M1015.1 621.3L1255.3 683.2M634.3 534.7L808.1 580.4M808.1 580.4L1013 634.3M630.1 539.5L805.2 586M805.2 586L1011.9 641M625.8 544.4L802.2 591.8M802.2 591.8L1010.8 647.8M621.5 549.4L799.2 597.6M799.2 597.6L1009.7 654.7M464.2 512.5L617.1 554.4M617.1 554.4L796.1 603.5M796.1 603.5L1008.5 661.8M458.7 516.9L612.6 559.6M612.6 559.6L792.9 609.6M453.2 521.4L608 564.8M608 564.8L789.7 615.8M447.6 525.9L603.4 570.1M603.4 570.1L786.5 622.1M307.2 491.9L441.9 530.6M441.9 530.6L598.6 575.6M598.6 575.6L783.1 628.5M294.1 500.1L430.2 540.1M430.2 540.1L588.9 586.7M287.5 504.3L424.2 545M424.2 545L583.8 592.4M161.8 472.9L280.7 508.6M280.7 508.6L418.1 550M418.1 550L578.7 598.3M154.5 476.7L273.8 513M273.8 513L411.8 555M147 480.5L266.8 517.4M266.8 517.4L405.5 560.2M137.4 483.7L256.6 521M256.6 521L394.8 564.1M22.7 453.9L125.5 486.4M125.5 486.4L243.3 523.6M243.3 523.6L379.8 566.7M11.9 456.5L113.5 489M113.5 489L229.9 526.3M229.9 526.3L364.6 569.4M1 459.2L101.3 491.7M101.3 491.7L216.3 529M-21.3 464.6L76.7 497.2M76.7 497.2L188.8 534.5M-32.6 467.3L64.2 499.9M64.2 499.9L174.8 537.3M-44 470.1L51.5 502.7M-55.6 472.9L38.7 505.6M-67.3 475.7L25.8 508.4M-79.2 478.5L12.7 511.3" stroke="#acd2e3" stroke-width="1.2" fill="none" opacity="0.29"/>
<path d="M5 589.5L-194.3 698.6M16.7 590.2L-180.2 699.3M28.3 591L-166.1 700M40 591.8L-152 700.7M51.8 592.5L-137.8 701.4M63.5 593.3L-123.7 702.1M75.3 594.1L-109.5 702.9M242.1 516.1L110.8 596.4M252.3 516.9L122.7 597.2M262.5 517.7L134.7 598M272.8 518.5L146.6 598.8M283 519.3L158.6 599.6M293.3 520.1L170.6 600.4M303.7 520.9L182.7 601.1M314 521.7L194.8 601.9M324.4 522.5L206.9 602.7M345.3 524.1L231.2 604.3M442.6 462.9L355.8 524.9M355.8 524.9L243.4 605.1M451.8 463.7L366.3 525.7M461 464.5L376.8 526.5M470.3 465.3L387.4 527.4M479.6 466.1L398 528.2M488.9 466.9L408.7 529M498.3 467.7L419.3 529.8M507.7 468.6L430 530.7M586.5 420.6L526.6 470.2M526.6 470.2L451.5 532.3M595 421.4L536.1 471M536.1 471L462.4 533.2M603.5 422.2L545.6 471.9M545.6 471.9L473.2 534M612 423L555.2 472.7M620.6 423.8L564.8 473.5M629.1 424.6L574.4 474.4M637.8 425.5L584 475.2M646.4 426.3L593.7 476M697.4 386.4L655.1 427.1M655.1 427.1L603.5 476.9M713.1 388L672.6 428.8M672.6 428.8L623 478.6M721.1 388.8L681.3 429.6M681.3 429.6L632.8 479.4M729.1 389.6L690.2 430.4M737.1 390.4L699 431.3M745.1 391.2L707.9 432.1M753.2 392L716.8 432.9M790.9 358.6L761.3 392.8M761.3 392.8L725.7 433.8M798.3 359.4L769.4 393.6M769.4 393.6L734.7 434.6M805.8 360.2L777.5 394.5M777.5 394.5L743.7 435.5M820.8 361.8L794 396.1M828.3 362.6L802.2 397M857.5 334.3L835.9 363.4M835.9 363.4L810.5 397.8M864.5 335L843.5 364.2M843.5 364.2L818.8 398.6M871.5 335.8L851.2 365M851.2 365L827.2 399.5M878.6 336.6L858.9 365.9M858.9 365.9L835.6 400.3M885.7 337.4L866.6 366.7M866.6 366.7L844 401.2M892.9 338.2L874.3 367.5M900 339L882.1 368.3M928.9 315.3L914.5 340.6M914.5 340.6L897.8 370M935.6 316L921.8 341.4M921.8 341.4L905.6 370.8M942.4 316.8L929.1 342.2M929.1 342.2L913.6 371.7M949.2 317.6L936.4 343M936.4 343L921.5 372.5M956 318.4L943.8 343.8M973.1 297L962.9 319.2M962.9 319.2L951.2 344.6M979.6 297.8L969.8 320M969.8 320L958.6 345.5M986.1 298.6L976.8 320.8M976.8 320.8L966.1 346.3M992.6 299.3L983.7 321.6M983.7 321.6L973.6 347.1M1005.7 300.9L997.8 323.2M997.8 323.2L988.7 348.8M1018.8 282.1L1012.3 301.7M1012.3 301.7L1004.8 324M1004.8 324L996.3 349.6M1025.1 282.8L1018.9 302.5M1018.9 302.5L1011.9 324.8M1031.3 283.6L1025.6 303.2M1025.6 303.2L1019.1 325.6M1037.6 284.3L1032.3 304M1032.3 304L1026.2 326.5M1043.9 285.1L1039 304.8M1039 304.8L1033.4 327.3M1050.3 285.9L1045.8 305.6M1045.8 305.6L1040.7 328.1M1056.7 286.6L1052.6 306.4M1052.6 306.4L1047.9 328.9M1063.1 287.4L1059.4 307.2M1059.4 307.2L1055.3 329.8M1076 289L1073.2 308.9M1073.2 308.9L1070 331.5M1082.5 289.8L1080.1 309.7M1080.1 309.7L1077.4 332.3M1089.1 290.6L1087.1 310.5M1087.1 310.5L1084.8 333.2M1095.6 291.4L1094.1 311.3M1102.3 292.2L1101.1 312.2M1108.9 293L1108.2 313M1115.6 293.8L1115.3 313.8M1122.3 294.6L1122.5 314.7M1129.1 295.4L1129.6 315.5M1142.7 297.1L1144.1 317.3M1149.5 297.9L1151.4 318.1M1156.4 298.7L1158.7 319M1163.4 299.6L1166.1 319.9M1170.3 300.4L1173.5 320.7M1177.3 301.3L1180.9 321.6M1184.4 302.1L1188.4 322.5M1191.5 303L1196 323.4M1198.6 303.9L1203.5 324.3M1212.9 305.6L1218.7 326.1M1220.2 306.5L1226.4 327M1227.4 307.3L1234.1 327.9M1234.7 308.2L1241.9 328.8M1242.1 309.1L1249.7 329.7M1249.7 329.7L1258.3 353.1M1249.5 310L1257.5 330.7M1257.5 330.7L1266.7 354.1M1256.9 310.9L1265.4 331.6M1265.4 331.6L1275.1 355M1264.4 311.8L1273.4 332.5M1273.4 332.5L1283.5 356M1271.9 312.7L1281.3 333.5M1281.3 333.5L1292 357M1287 314.6L1297.4 335.4M1297.4 335.4L1309.1 358.9M1294.7 315.5L1305.5 336.3M1305.5 336.3L1317.7 359.9M1302.3 316.4L1313.6 337.3M1313.6 337.3L1326.4 360.9M1310.1 317.4L1321.8 338.3M1321.8 338.3L1335.1 361.9M1317.8 318.3L1330 339.2M1330 339.2L1343.8 362.9M1325.6 319.3L1338.3 340.2M1251 661L1531.8 731.1M1252.4 668.2L1536.6 739.9M1253.8 675.6L1541.5 748.9M1255.3 683.2L1546.6 758.1M1013 634.3L1258.3 698.8M1258.3 698.8L1557.1 777.3M1011.9 641L1259.8 706.8M1259.8 706.8L1562.5 787.2M1010.8 647.8L1261.4 715.1M1009.7 654.7L1263 723.5M1008.5 661.8L1264.7 732.1M792.9 609.6L1007.3 669.1M1007.3 669.1L1266.4 741M789.7 615.8L1006.1 676.5M1006.1 676.5L1268.1 750M786.5 622.1L1004.9 684.1M783.1 628.5L1003.6 691.8M588.9 586.7L776.3 641.8M776.3 641.8L1001 707.8M583.8 592.4L772.7 648.6M772.7 648.6L999.7 716M578.7 598.3L769.1 655.6M411.8 555L573.5 604.3M573.5 604.3L765.4 662.7M405.5 560.2L568.2 610.3M568.2 610.3L761.7 669.9M394.8 564.1L557 614.7M557 614.7L749.8 674.9M379.8 566.7L539.8 617.3M539.8 617.3L729.9 677.4M364.6 569.4L522.4 619.9M216.3 529L349.3 572.1M349.3 572.1L505 622.6M188.8 534.5L318.3 577.6M318.3 577.6L469.5 627.9M174.8 537.3L302.5 580.3M302.5 580.3L451.6 630.6M51.5 502.7L160.7 540.1M160.7 540.1L286.6 583.1M38.7 505.6L146.4 542.9M146.4 542.9L270.6 586M25.8 508.4L132 545.8M132 545.8L254.4 588.8M12.7 511.3L117.5 548.7M117.5 548.7L238.1 591.7M-91.1 481.4L-0.5 514.2M-0.5 514.2L102.8 551.6M-13.9 517.2L87.9 554.6M-27.4 520.2L72.9 557.6" stroke="#acd2e3" stroke-width="1.2" fill="none" opacity="0.38"/>
<path d="M87.1 594.9L-95.2 703.6M110.8 596.4L-66.7 705M122.7 597.2L-52.4 705.7M134.7 598L-38 706.5M146.6 598.8L-23.6 707.2M158.6 599.6L-9.2 707.9M170.6 600.4L5.2 708.6M182.7 601.1L19.7 709.4M194.8 601.9L34.1 710.1M206.9 602.7L48.7 710.8M366.3 525.7L255.7 605.9M376.8 526.5L268 606.7M387.4 527.4L280.3 607.6M398 528.2L292.6 608.4M408.7 529L305 609.2M419.3 529.8L317.4 610M430 530.7L329.8 610.8M451.5 532.3L354.8 612.5M462.4 533.2L367.3 613.3M555.2 472.7L484.1 534.9M564.8 473.5L495 535.7M574.4 474.4L505.9 536.5M584 475.2L516.9 537.4M593.7 476L527.9 538.3M603.5 476.9L538.9 539.1M623 478.6L561.1 540.8M632.8 479.4L572.2 541.7M690.2 430.4L642.7 480.3M642.7 480.3L583.4 542.6M699 431.3L652.6 481.2M707.9 432.1L662.5 482M716.8 432.9L672.4 482.9M725.7 433.8L682.4 483.8M734.7 434.6L692.5 484.6M743.7 435.5L702.5 485.5M794 396.1L761.9 437.2M761.9 437.2L722.7 487.3M802.2 397L771 438.1M771 438.1L732.9 488.1M810.5 397.8L780.1 438.9M818.8 398.6L789.3 439.8M827.2 399.5L798.5 440.7M835.6 400.3L807.8 441.6M844 401.2L817.1 442.4M874.3 367.5L852.5 402M852.5 402L826.4 443.3M882.1 368.3L861 402.9M861 402.9L835.8 444.2M897.8 370L878.1 404.6M905.6 370.8L886.7 405.5M913.6 371.7L895.3 406.4M921.5 372.5L904 407.2M943.8 343.8L929.5 373.4M929.5 373.4L912.7 408.1M951.2 344.6L937.5 374.2M937.5 374.2L921.4 409M958.6 345.5L945.6 375.1M945.6 375.1L930.2 409.9M966.1 346.3L953.6 375.9M953.6 375.9L939 410.8M973.6 347.1L961.8 376.8M961.8 376.8L947.9 411.7M988.7 348.8L978.1 378.5M996.3 349.6L986.3 379.4M1011.9 324.8L1003.9 350.5M1003.9 350.5L994.6 380.3M1019.1 325.6L1011.6 351.3M1011.6 351.3L1002.9 381.2M1026.2 326.5L1019.3 352.2M1019.3 352.2L1011.2 382.1M1033.4 327.3L1027 353.1M1027 353.1L1019.6 382.9M1040.7 328.1L1034.8 353.9M1034.8 353.9L1028 383.8M1047.9 328.9L1042.6 354.8M1042.6 354.8L1036.5 384.7M1055.3 329.8L1050.5 355.7M1050.5 355.7L1044.9 385.6M1070 331.5L1066.3 357.4M1077.4 332.3L1074.3 358.3M1084.8 333.2L1082.3 359.2M1094.1 311.3L1092.3 334M1092.3 334L1090.3 360.1M1101.1 312.2L1099.8 334.9M1099.8 334.9L1098.4 361M1108.2 313L1107.4 335.8M1107.4 335.8L1106.5 361.9M1115.3 313.8L1115 336.6M1115 336.6L1114.6 362.8M1122.5 314.7L1122.6 337.5M1122.6 337.5L1122.8 363.7M1129.6 315.5L1130.3 338.4M1130.3 338.4L1131 364.6M1144.1 317.3L1145.7 340.2M1145.7 340.2L1147.6 366.4M1151.4 318.1L1153.5 341.1M1153.5 341.1L1156 367.3M1158.7 319L1161.4 342M1161.4 342L1164.4 368.3M1166.1 319.9L1169.2 342.9M1169.2 342.9L1172.8 369.2M1173.5 320.7L1177.1 343.8M1177.1 343.8L1181.2 370.1M1180.9 321.6L1185.1 344.7M1185.1 344.7L1189.8 371.1M1188.4 322.5L1193 345.6M1193 345.6L1198.3 372M1196 323.4L1201.1 346.5M1201.1 346.5L1206.9 373M1203.5 324.3L1209.1 347.4M1209.1 347.4L1215.5 374M1218.7 326.1L1225.4 349.3M1225.4 349.3L1232.9 375.9M1226.4 327L1233.5 350.3M1233.5 350.3L1241.7 376.8M1234.1 327.9L1241.8 351.2M1241.8 351.2L1250.5 377.8M1241.9 328.8L1250 352.1M1250 352.1L1259.3 378.8M1258.3 353.1L1268.2 379.8M1266.7 354.1L1277.1 380.8M1275.1 355L1286.1 381.8M1283.5 356L1295.1 382.8M1295.1 382.8L1308.5 413.7M1292 357L1304.2 383.8M1304.2 383.8L1318.3 414.7M1309.1 358.9L1322.5 385.8M1322.5 385.8L1337.9 416.8M1317.7 359.9L1331.7 386.8M1331.7 386.8L1347.8 417.8M1326.4 360.9L1340.9 387.9M1261.4 715.1L1568.1 797.4M1263 723.5L1573.8 807.8M1264.7 732.1L1579.6 818.5M1266.4 741L1585.7 829.5M1268.1 750L1591.8 840.8M1004.9 684.1L1269.9 759.3M1269.9 759.3L1598.2 852.4M1003.6 691.8L1271.7 768.7M1001 707.8L1275.5 788.4M999.7 716L1277.5 798.6M769.1 655.6L998.3 724.5M998.3 724.5L1279.5 809.1M765.4 662.7L996.9 733.2M761.7 669.9L995.4 742M749.8 674.9L983 747.7M729.9 677.4L959.4 749.9M522.4 619.9L709.8 679.9M709.8 679.9L935.8 752.2M505 622.6L689.5 682.4M689.5 682.4L911.9 754.5M469.5 627.9L648.6 687.5M451.6 630.6L627.9 690.1M286.6 583.1L433.5 633.4M433.5 633.4L607.1 692.7M270.6 586L415.3 636.1M415.3 636.1L586.1 695.3M254.4 588.8L396.9 638.9M396.9 638.9L564.9 698M238.1 591.7L378.4 641.7M102.8 551.6L221.6 594.6M221.6 594.6L359.7 644.5M87.9 554.6L204.9 597.5M204.9 597.5L340.8 647.4M72.9 557.6L188.1 600.5M188.1 600.5L321.8 650.3M-54.9 526.3L42.5 563.6M42.5 563.6L154 606.5M-68.8 529.3L27 566.7M27 566.7L136.7 609.5M-83 532.5L11.3 569.8M11.3 569.8L119.3 612.6M-97.3 535.6L-4.5 573" stroke="#acd2e3" stroke-width="1.2" fill="none" opacity="0.46"/>
<path d="M231.2 604.3L77.8 712.3M243.4 605.1L92.4 713M255.7 605.9L107 713.8M268 606.7L121.7 714.5M280.3 607.6L136.4 715.2M292.6 608.4L151.1 716M305 609.2L165.9 716.7M317.4 610L180.6 717.5M329.8 610.8L195.5 718.2M473.2 534L379.8 614.1M484.1 534.9L392.4 614.9M495 535.7L405.1 615.8M505.9 536.5L417.7 616.6M516.9 537.4L430.4 617.4M527.9 538.3L443.1 618.3M538.9 539.1L455.9 619.1M561.1 540.8L481.5 620.8M652.6 481.2L594.6 543.4M662.5 482L605.8 544.3M672.4 482.9L617.1 545.2M682.4 483.8L628.4 546.1M692.5 484.6L639.8 546.9M702.5 485.5L651.2 547.8M722.7 487.3L674 549.6M732.9 488.1L685.5 550.5M780.1 438.9L743.1 489M789.3 439.8L753.3 489.9M798.5 440.7L763.6 490.8M807.8 441.6L773.9 491.7M817.1 442.4L784.3 492.6M826.4 443.3L794.6 493.5M835.8 444.2L805.1 494.4M878.1 404.6L854.6 446M854.6 446L826 496.2M886.7 405.5L864 446.9M895.3 406.4L873.5 447.8M904 407.2L883.1 448.7M912.7 408.1L892.7 449.6M921.4 409L902.3 450.5M930.2 409.9L911.9 451.4M939 410.8L921.6 452.3M947.9 411.7L931.3 453.2M978.1 378.5L965.7 413.5M965.7 413.5L950.9 455.1M986.3 379.4L974.7 414.4M994.6 380.3L983.7 415.3M1002.9 381.2L992.7 416.2M1011.2 382.1L1001.8 417.1M1019.6 382.9L1010.9 418M1028 383.8L1020 419M1036.5 384.7L1029.2 419.9M1044.9 385.6L1038.4 420.8M1066.3 357.4L1062 387.5M1062 387.5L1057 422.7M1074.3 358.3L1070.6 388.4M1070.6 388.4L1066.4 423.6M1082.3 359.2L1079.3 389.3M1079.3 389.3L1075.8 424.6M1090.3 360.1L1087.9 390.2M1087.9 390.2L1085.2 425.5M1098.4 361L1096.7 391.1M1096.7 391.1L1094.7 426.5M1106.5 361.9L1105.4 392.1M1105.4 392.1L1104.2 427.4M1114.6 362.8L1114.2 393M1122.8 363.7L1123 393.9M1131 364.6L1131.9 394.9M1147.6 366.4L1149.8 396.8M1156 367.3L1158.8 397.7M1164.4 368.3L1167.8 398.7M1172.8 369.2L1176.9 399.7M1181.2 370.1L1186 400.6M1189.8 371.1L1195.2 401.6M1198.3 372L1204.4 402.6M1206.9 373L1213.6 403.6M1215.5 374L1222.9 404.6M1232.9 375.9L1241.6 406.5M1241.6 406.5L1251.8 442.4M1241.7 376.8L1251.1 407.6M1251.1 407.6L1262 443.4M1250.5 377.8L1260.5 408.6M1260.5 408.6L1272.3 444.4M1259.3 378.8L1270 409.6M1270 409.6L1282.6 445.5M1268.2 379.8L1279.6 410.6M1279.6 410.6L1292.9 446.5M1277.1 380.8L1289.2 411.6M1289.2 411.6L1303.3 447.6M1286.1 381.8L1298.8 412.6M1298.8 412.6L1313.7 448.6M1308.5 413.7L1324.2 449.7M1318.3 414.7L1334.7 450.7M1271.7 768.7L1604.7 864.3M1275.5 788.4L1618.3 889.1M1277.5 798.6L1625.3 902M1279.5 809.1L1632.6 915.3M996.9 733.2L1281.5 819.8M995.4 742L1283.7 830.8M983 747.7L1270.6 837.4M959.4 749.9L1242.3 839.3M935.8 752.2L1213.8 841.2M911.9 754.5L1185.2 843.1M648.6 687.5L863.9 759.2M627.9 690.1L839.6 761.5M607.1 692.7L815.2 763.9M586.1 695.3L790.7 766.3M564.9 698L766 768.7M378.4 641.7L543.6 700.6M543.6 700.6L741.1 771.1M359.7 644.5L522.2 703.3M340.8 647.4L500.5 706M321.8 650.3L478.8 708.7M154 606.5L283.3 656.1M283.3 656.1L434.7 714.3M136.7 609.5L263.8 659.1M119.3 612.6L244.1 662M-4.5 573L101.6 615.7M101.6 615.7L224.2 665M-20.5 576.2L83.8 618.8M83.8 618.8L204.2 668.1M-36.6 579.4L65.8 622M65.8 622L183.9 671.1M-53 582.6L47.7 625.2M-69.5 585.9L29.3 628.4M-86.2 589.2L10.8 631.7" stroke="#acd2e3" stroke-width="1.2" fill="none" opacity="0.54"/>
<path d="M5.2 708.6L-230.1 862.6M19.7 709.4L-212 863.2M34.1 710.1L-194 863.7M48.7 710.8L-175.9 864.2M77.8 712.3L-139.7 865.3M92.4 713L-121.5 865.8M107 713.8L-103.4 866.4M354.8 612.5L225.2 719.7M367.3 613.3L240.1 720.5M379.8 614.1L255 721.2M392.4 614.9L270 722M405.1 615.8L285 722.7M417.7 616.6L300 723.5M430.4 617.4L315.1 724.2M443.1 618.3L330.1 725M572.2 541.7L494.4 621.6M583.4 542.6L507.3 622.5M594.6 543.4L520.2 623.3M605.8 544.3L533.2 624.2M617.1 545.2L546.2 625M628.4 546.1L559.2 625.9M639.8 546.9L572.3 626.8M651.2 547.8L585.4 627.6M743.1 489L697 551.4M753.3 489.9L708.6 552.3M763.6 490.8L720.2 553.2M773.9 491.7L731.8 554.1M784.3 492.6L743.5 555M794.6 493.5L755.2 555.9M805.1 494.4L766.9 556.8M864 446.9L836.5 497.2M873.5 447.8L847.1 498.1M883.1 448.7L857.7 499M892.7 449.6L868.3 499.9M902.3 450.5L879 500.9M911.9 451.4L889.7 501.8M921.6 452.3L900.5 502.7M931.3 453.2L911.3 503.7M950.9 455.1L933 505.6M974.7 414.4L960.7 456M983.7 415.3L970.6 457M992.7 416.2L980.5 457.9M1001.8 417.1L990.5 458.8M1010.9 418L1000.5 459.8M1020 419L1010.5 460.7M1029.2 419.9L1020.6 461.7M1038.4 420.8L1030.7 462.7M1057 422.7L1051.1 464.6M1066.4 423.6L1061.3 465.5M1075.8 424.6L1071.6 466.5M1085.2 425.5L1081.9 467.5M1094.7 426.5L1092.3 468.5M1104.2 427.4L1102.7 469.5M1114.2 393L1113.7 428.4M1113.7 428.4L1113.1 470.4M1123 393.9L1123.3 429.4M1123.3 429.4L1123.6 471.4M1131.9 394.9L1132.9 430.4M1132.9 430.4L1134.1 472.4M1149.8 396.8L1152.3 432.3M1152.3 432.3L1155.3 474.4M1158.8 397.7L1162.1 433.3M1162.1 433.3L1166 475.5M1167.8 398.7L1171.9 434.3M1171.9 434.3L1176.7 476.5M1176.9 399.7L1181.7 435.3M1181.7 435.3L1187.4 477.5M1186 400.6L1191.6 436.3M1191.6 436.3L1198.2 478.5M1195.2 401.6L1201.5 437.3M1201.5 437.3L1209 479.5M1204.4 402.6L1211.5 438.3M1211.5 438.3L1219.9 480.6M1213.6 403.6L1221.5 439.3M1221.5 439.3L1230.8 481.6M1222.9 404.6L1231.6 440.3M1231.6 440.3L1241.8 482.6M1251.8 442.4L1263.9 484.7M1262 443.4L1275 485.8M1272.3 444.4L1286.1 486.8M1282.6 445.5L1297.3 487.9M1292.9 446.5L1308.6 488.9M1303.3 447.6L1319.9 490M1313.7 448.6L1331.2 491.1M1324.2 449.7L1342.6 492.2M1281.5 819.8L1640.1 929M1283.7 830.8L1647.8 943.1M1270.6 837.4L1634.3 950.9M1242.3 839.3L1599.3 952.1M1213.8 841.2L1564.1 953.3M1185.2 843.1L1528.9 954.6M863.9 759.2L1127.6 847M839.6 761.5L1098.6 848.9M815.2 763.9L1069.5 850.9M790.7 766.3L1040.2 852.8M766 768.7L1010.9 854.8M741.1 771.1L981.4 856.7M522.2 703.3L716.1 773.5M716.1 773.5L951.7 858.7M500.5 706L691 775.9M478.8 708.7L665.7 778.4M434.7 714.3L614.6 783.3M263.8 659.1L412.4 717M412.4 717L588.8 785.8M244.1 662L390 719.8M224.2 665L367.4 722.7M204.2 668.1L344.6 725.5M183.9 671.1L321.6 728.4M47.7 625.2L163.5 674.2M163.5 674.2L298.4 731.3M29.3 628.4L143 677.3M10.8 631.7L122.2 680.5M-26.9 638.3L80.1 686.8" stroke="#acd2e3" stroke-width="1.2" fill="none" opacity="0.62"/>
<path d="M121.7 714.5L-85.2 866.9M136.4 715.2L-67 867.5M151.1 716L-48.7 868M165.9 716.7L-30.5 868.5M180.6 717.5L-12.2 869.1M195.5 718.2L6.1 869.6M225.2 719.7L42.8 870.7M455.9 619.1L345.3 725.8M481.5 620.8L375.6 727.3M494.4 621.6L390.8 728.1M507.3 622.5L406 728.8M520.2 623.3L421.3 729.6M533.2 624.2L436.6 730.4M674 549.6L611.7 629.3M685.5 550.5L624.9 630.2M697 551.4L638.1 631.1M708.6 552.3L651.4 632M720.2 553.2L664.7 632.8M731.8 554.1L678.1 633.7M743.5 555L691.5 634.6M755.2 555.9L704.9 635.5M826 496.2L790.5 558.6M836.5 497.2L802.4 559.6M847.1 498.1L814.3 560.5M857.7 499L826.2 561.4M868.3 499.9L838.2 562.3M879 500.9L850.2 563.3M889.7 501.8L862.3 564.2M900.5 502.7L874.3 565.1M911.3 503.7L886.5 566.1M960.7 456L943.9 506.5M970.6 457L954.9 507.5M980.5 457.9L965.8 508.4M990.5 458.8L976.9 509.4M1000.5 459.8L987.9 510.3M1010.5 460.7L999 511.3M1020.6 461.7L1010.2 512.3M1030.7 462.7L1021.4 513.2M1051.1 464.6L1043.9 515.2M1061.3 465.5L1055.2 516.2M1071.6 466.5L1066.6 517.2M1081.9 467.5L1078 518.2M1092.3 468.5L1089.4 519.2M1102.7 469.5L1100.9 520.2M1113.1 470.4L1112.4 521.2M1123.6 471.4L1124 522.2M1134.1 472.4L1135.6 523.2M1155.3 474.4L1158.9 525.2M1166 475.5L1170.7 526.2M1176.7 476.5L1182.5 527.3M1187.4 477.5L1194.3 528.3M1198.2 478.5L1206.2 529.3M1209 479.5L1218.1 530.4M1219.9 480.6L1230 531.4M1230.8 481.6L1242.1 532.4M1241.8 482.6L1254.1 533.5M1263.9 484.7L1278.4 535.6M1275 485.8L1290.5 536.7M1286.1 486.8L1302.8 537.7M1297.3 487.9L1315.1 538.8M1308.6 488.9L1327.4 539.9M1319.9 490L1339.8 540.9M1331.2 491.1L1352.2 542M1127.6 847L1458.2 957M1098.6 848.9L1422.7 958.2M1069.5 850.9L1387.1 959.5M1040.2 852.8L1351.4 960.7M1010.9 854.8L1315.7 961.9M691 775.9L921.9 860.7M665.7 778.4L892 862.7M614.6 783.3L831.8 866.7M588.8 785.8L801.5 868.8M390 719.8L562.9 788.3M367.4 722.7L536.8 790.9M344.6 725.5L510.5 793.4M321.6 728.4L484.1 796M298.4 731.3L457.5 798.5M143 677.3L275.1 734.2M275.1 734.2L430.7 801.1M122.2 680.5L251.6 737.1M80.1 686.8L204 743.1M-46 641.7L58.8 690.1M58.8 690.1L180 746.1M-65.3 645.1L37.2 693.3M-84.8 648.5L15.5 696.6" stroke="#acd2e3" stroke-width="1.2" fill="none" opacity="0.71"/>
<path d="M240.1 720.5L61.1 871.2M255 721.2L79.5 871.8M270 722L97.9 872.3M285 722.7L116.4 872.9M300 723.5L134.8 873.4M315.1 724.2L153.3 874M330.1 725L171.8 874.5M546.2 625L451.9 731.1M559.2 625.9L467.3 731.9M572.3 626.8L482.7 732.7M585.4 627.6L498.1 733.5M611.7 629.3L529.1 735M624.9 630.2L544.6 735.8M766.9 556.8L718.3 636.4M790.5 558.6L745.4 638.1M802.4 559.6L758.9 639M814.3 560.5L772.5 639.9M826.2 561.4L786.2 640.8M838.2 562.3L799.8 641.7M933 505.6L910.8 568M943.9 506.5L923.1 568.9M954.9 507.5L935.3 569.9M965.8 508.4L947.7 570.8M976.9 509.4L960 571.8M987.9 510.3L972.4 572.7M999 511.3L984.9 573.7M1010.2 512.3L997.3 574.7M1021.4 513.2L1009.9 575.7M1043.9 515.2L1035 577.6M1055.2 516.2L1047.7 578.6M1278.4 535.6L1296.1 597.9M1290.5 536.7L1309.6 598.9M1302.8 537.7L1323.1 600M1315.1 538.8L1336.8 601M1327.4 539.9L1350.4 602.1M981.4 856.7L1279.8 963.2M951.7 858.7L1243.9 964.4M921.9 860.7L1207.9 965.7M892 862.7L1171.7 966.9M831.8 866.7L1099.2 969.4M562.9 788.3L771 870.8M536.8 790.9L740.4 872.8M510.5 793.4L709.7 874.9M484.1 796L678.8 877M457.5 798.5L647.7 879M251.6 737.1L403.8 803.7M204 743.1L349.4 809M180 746.1L321.9 811.7M37.2 693.3L155.7 749.1M15.5 696.6L131.3 752.2M-6.4 699.9L106.6 755.2M-28.6 703.3L81.8 758.3" stroke="#acd2e3" stroke-width="1.2" fill="none" opacity="0.79"/>
<path d="M345.3 725.8L190.4 875.1M375.6 727.3L227.5 876.2M390.8 728.1L246.1 876.7M406 728.8L264.7 877.3M421.3 729.6L283.3 877.8M436.6 730.4L302 878.4M638.1 631.1L560.2 736.6M651.4 632L575.8 737.4M664.7 632.8L591.4 738.2M678.1 633.7L607 738.9M691.5 634.6L622.7 739.7M704.9 635.5L638.4 740.5M718.3 636.4L654.2 741.3M850.2 563.3L813.6 642.6M862.3 564.2L827.3 643.5M874.3 565.1L841.1 644.4M886.5 566.1L854.9 645.3M910.8 568L882.7 647.2M923.1 568.9L896.6 648.1M935.3 569.9L910.6 649M947.7 570.8L924.6 649.9M960 571.8L938.7 650.8M1066.6 517.2L1060.4 579.6M1078 518.2L1073.1 580.6M1089.4 519.2L1085.9 581.5M1100.9 520.2L1098.7 582.5M1112.4 521.2L1111.5 583.5M1124 522.2L1124.4 584.5M1135.6 523.2L1137.4 585.5M1158.9 525.2L1163.4 587.6M1170.7 526.2L1176.5 588.6M1182.5 527.3L1189.6 589.6M1194.3 528.3L1202.7 590.6M1206.2 529.3L1215.9 591.6M1218.1 530.4L1229.2 592.7M1230 531.4L1242.5 593.7M1242.1 532.4L1255.8 594.7M1254.1 533.5L1269.2 595.8M801.5 868.8L1062.8 970.7M771 870.8L1026.3 972M430.7 801.1L616.6 881.1M403.8 803.7L585.3 883.2M349.4 809L522.2 887.4M321.9 811.7L490.4 889.5M155.7 749.1L294.3 814.3M294.3 814.3L458.5 891.7M131.3 752.2L266.5 817M266.5 817L426.5 893.8M106.6 755.2L238.5 819.8M238.5 819.8L394.3 896M81.8 758.3L210.3 822.5M210.3 822.5L361.9 898.1M-50.9 706.6L56.8 761.5M56.8 761.5L182 825.2M182 825.2L329.4 900.3M-73.5 710.1L31.5 764.6M31.5 764.6L153.4 828M153.4 828L296.7 902.5M-96.2 713.5L6.1 767.8M6.1 767.8L124.7 830.8M124.7 830.8L263.9 904.7M-45.4 774.2L66.7 836.4M66.7 836.4L197.8 909.1M-71.5 777.5L37.4 839.2M37.4 839.2L164.5 911.3M-97.8 780.8L7.9 842.1M7.9 842.1L131.1 913.5M-21.8 845L97.5 915.8M-51.7 847.9L63.7 918M-81.8 850.8L29.8 920.3M-112.1 853.7L-4.3 922.6" stroke="#acd2e3" stroke-width="1.2" fill="none" opacity="0.88"/>
<path d="M451.9 731.1L320.7 878.9M467.3 731.9L339.4 879.5M482.7 732.7L358.1 880M498.1 733.5L376.9 880.6M529.1 735L414.4 881.7M544.6 735.8L433.3 882.3M560.2 736.6L452.1 882.8M575.8 737.4L471 883.4M591.4 738.2L489.9 883.9M607 738.9L508.8 884.5M622.7 739.7L527.7 885.1M638.4 740.5L546.7 885.6M654.2 741.3L565.7 886.2M745.4 638.1L685.8 742.9M685.8 742.9L603.7 887.3M758.9 639L701.7 743.7M701.7 743.7L622.8 887.9M772.5 639.9L717.5 744.5M717.5 744.5L641.9 888.4M786.2 640.8L733.5 745.3M733.5 745.3L661 889M799.8 641.7L749.4 746.1M749.4 746.1L680.1 889.6M813.6 642.6L765.4 746.9M765.4 746.9L699.3 890.1M827.3 643.5L781.4 747.7M781.4 747.7L718.4 890.7M841.1 644.4L797.5 748.5M797.5 748.5L737.6 891.3M854.9 645.3L813.6 749.4M813.6 749.4L756.9 891.8M882.7 647.2L845.8 751M845.8 751L795.4 893M896.6 648.1L862 751.8M862 751.8L814.7 893.6M910.6 649L878.2 752.6M878.2 752.6L834 894.1M924.6 649.9L894.5 753.4M894.5 753.4L853.4 894.7M938.7 650.8L910.8 754.2M910.8 754.2L872.7 895.3M972.4 572.7L952.8 651.8M952.8 651.8L927.1 755.1M927.1 755.1L892.1 895.8M984.9 573.7L966.9 652.7M966.9 652.7L943.5 755.9M943.5 755.9L911.5 896.4M997.3 574.7L981.1 653.6M981.1 653.6L959.9 756.7M959.9 756.7L931 897M1009.9 575.7L995.3 654.6M995.3 654.6L976.3 757.5M976.3 757.5L950.4 897.6M1035 577.6L1023.8 656.4M1023.8 656.4L1009.3 759.2M1009.3 759.2L989.5 898.7M1047.7 578.6L1038.2 657.4M1038.2 657.4L1025.8 760M1025.8 760L1009 899.3M1060.4 579.6L1052.5 658.3M1052.5 658.3L1042.4 760.9M1042.4 760.9L1028.6 899.9M1073.1 580.6L1067 659.3M1067 659.3L1059 761.7M1059 761.7L1048.2 900.5M1085.9 581.5L1081.4 660.2M1081.4 660.2L1075.6 762.6M1075.6 762.6L1067.8 901M1098.7 582.5L1095.9 661.2M1095.9 661.2L1092.3 763.4M1092.3 763.4L1087.4 901.6M1111.5 583.5L1110.4 662.1M1110.4 662.1L1109 764.2M1109 764.2L1107.1 902.2M1124.4 584.5L1125 663.1M1125 663.1L1125.8 765.1M1125.8 765.1L1126.8 902.8M1137.4 585.5L1139.6 664.1M1139.6 664.1L1142.5 765.9M1142.5 765.9L1146.5 903.4M1163.4 587.6L1169 666M1169 666L1176.2 767.6M1176.2 767.6L1186 904.5M1176.5 588.6L1183.7 667M1183.7 667L1193.1 768.5M1193.1 768.5L1205.8 905.1M1189.6 589.6L1198.5 667.9M1198.5 667.9L1210 769.3M1210 769.3L1225.6 905.7M1202.7 590.6L1213.3 668.9M1213.3 668.9L1227 770.2M1227 770.2L1245.4 906.3M1215.9 591.6L1228.2 669.9M1228.2 669.9L1244 771M1244 771L1265.3 906.9M1229.2 592.7L1243.1 670.9M1243.1 670.9L1261.1 771.9M1261.1 771.9L1285.2 907.5M1242.5 593.7L1258 671.8M1258 671.8L1278.1 772.8M1278.1 772.8L1305.1 908.1M1255.8 594.7L1273 672.8M1273 672.8L1295.2 773.6M1295.2 773.6L1325 908.7M1269.2 595.8L1288.1 673.8M1288.1 673.8L1312.4 774.5M1312.4 774.5L1345 909.2M1296.1 597.9L1318.2 675.8M1318.2 675.8L1346.8 776.2M1309.6 598.9L1333.4 676.8M1323.1 600L1348.6 677.8" stroke="#acd2e3" stroke-width="1.2" fill="none" opacity="0.96"/>
<path d="M367 203L321.1 216.7M321.1 216.7L269.2 232.1M269.2 232.1L210.2 249.6M210.2 249.6L142.3 269.8M142.3 269.8L63.5 293.3M63.5 293.3L-29.1 320.8M401.6 207.2L356.9 221.4M356.9 221.4L306.3 237.4M306.3 237.4L248.6 255.8M248.6 255.8L182 276.9M182 276.9L104.4 301.6M104.4 301.6L12.8 330.7M12.8 330.7L-97 365.6M437.4 211.5L394.2 226.3M394.2 226.3L345 243M345 243L288.7 262.2M288.7 262.2L223.6 284.4M223.6 284.4L147.4 310.4M147.4 310.4L57.1 341.1M474.7 216.1L433 231.4M433 231.4L385.4 248.9M385.4 248.9L330.8 269M330.8 269L267.4 292.2M267.4 292.2L192.9 319.6M513.5 220.8L473.4 236.7M473.4 236.7L427.6 255M427.6 255L374.9 276M374.9 276L313.4 300.5M553.8 225.7L515.6 242.3M515.6 242.3L471.8 261.4M471.8 261.4L421.2 283.4M595.8 230.7L559.6 248.1M367 203L425.3 210.1M425.3 210.1L487.5 217.6M487.5 217.6L553.8 225.7M553.8 225.7L624.8 234.3M624.8 234.3L700.9 243.5M700.9 243.5L782.6 253.4M782.6 253.4L870.8 264.1M870.8 264.1L966.1 275.7M966.1 275.7L1069.5 288.2M1069.5 288.2L1182 301.8M1182 301.8L1304.9 316.7M1304.9 316.7L1439.7 333.1M340.1 211L399.7 218.6M399.7 218.6L463.4 226.7M463.4 226.7L531.5 235.4M531.5 235.4L604.5 244.7M604.5 244.7L683.1 254.7M683.1 254.7L767.8 265.5M767.8 265.5L859.4 277.2M859.4 277.2L958.8 289.9M958.8 289.9L1067 303.6M1067 303.6L1185.3 318.7M1185.3 318.7L1315 335.3M1315 335.3L1458.1 353.5M311.2 219.6L372.1 227.8M372.1 227.8L437.3 236.5M437.3 236.5L507.3 245.9M507.3 245.9L582.5 256M582.5 256L663.7 266.9M663.7 266.9L751.5 278.7M751.5 278.7L846.9 291.5M846.9 291.5L950.7 305.5M950.7 305.5L1064.2 320.7M1064.2 320.7L1188.9 337.5M1188.9 337.5L1326.4 355.9M1326.4 355.9L1478.8 376.4M280.2 228.8L342.4 237.7M342.4 237.7L409.2 247.1M409.2 247.1L481 257.4M481 257.4L558.6 268.4M558.6 268.4L642.6 280.3M642.6 280.3L733.7 293.2M733.7 293.2L833.1 307.3M833.1 307.3L941.7 322.7M941.7 322.7L1061.1 339.7M1061.1 339.7L1192.9 358.4M1192.9 358.4L1339.1 379.1M246.6 238.8L310.1 248.4M310.1 248.4L378.6 258.7M378.6 258.7L452.5 269.8M452.5 269.8L532.4 281.8M532.4 281.8L619.3 294.9M619.3 294.9L714.1 309.2M714.1 309.2L817.8 324.8M817.8 324.8L931.8 341.9M931.8 341.9L1057.7 360.9M1057.7 360.9L1197.4 381.9M1197.4 381.9L1353.4 405.4M210.2 249.6L275.1 260M275.1 260L345.2 271.3M345.2 271.3L421.2 283.4M421.2 283.4L503.7 296.6M503.7 296.6L593.8 311.1M593.8 311.1L692.4 326.9M692.4 326.9L800.8 344.2M800.8 344.2L920.6 363.4M920.6 363.4L1053.8 384.7M170.7 261.4L236.9 272.7M236.9 272.7L308.7 285M308.7 285L386.8 298.4M386.8 298.4L472.1 313M472.1 313L565.4 328.9M565.4 328.9L668.2 346.5M127.5 274.2L195.1 286.7M195.1 286.7L268.7 300.2M268.7 300.2L348.9 314.9M348.9 314.9L436.9 331.1M80.3 288.3L149.2 301.9" stroke="#86b9d1" stroke-width="1.45" fill="none" opacity="0.04"/>
<path d="M57.1 341.1L-51.7 378.2M192.9 319.6L104.1 352.2M104.1 352.2L-3.4 391.7M313.4 300.5L240.9 329.4M240.9 329.4L154.1 364M421.2 283.4L362 309.2M362 309.2L291.9 339.8M559.6 248.1L518.1 268.1M518.1 268.1L469.9 291.2M469.9 291.2L413.3 318.4M639.6 236.1L606.6 253.7M606.6 253.7L568.8 273.9M685.2 241.6L655.6 259.5M1053.8 384.7L1202.5 408.5M1202.5 408.5L1369.8 435.3M668.2 346.5L781.8 366M781.8 366L908.1 387.6M908.1 387.6L1049.4 411.7M1049.4 411.7L1208.4 438.9M436.9 331.1L533.9 348.9M533.9 348.9L641.1 368.6M641.1 368.6L760.4 390.5M760.4 390.5L893.9 415M149.2 301.9L224.4 316.9M224.4 316.9L306.9 333.2M306.9 333.2L397.8 351.2M397.8 351.2L498.5 371.2M28.3 303.7L98.4 318.8M98.4 318.8L175.3 335.4" stroke="#86b9d1" stroke-width="1.45" fill="none" opacity="0.12"/>
<path d="M-3.4 391.7L-136.4 440.6M154.1 364L48.3 406.2M48.3 406.2L-83.5 458.7M291.9 339.8L207.4 376.6M207.4 376.6L103.8 421.7M413.3 318.4L345.9 350.8M345.9 350.8L264.3 389.9M568.8 273.9L524.9 297.4M524.9 297.4L473.5 324.9M655.6 259.5L621.6 280M621.6 280L582.3 303.7M732.9 247.4L706.7 265.5M706.7 265.5L676.7 286.3M1208.4 438.9L1388.7 469.8M893.9 415L1044.3 442.6M1044.3 442.6L1215.1 474M498.5 371.2L610.5 393.4M610.5 393.4L736.1 418.3M736.1 418.3L877.6 446.3M175.3 335.4L260 353.6M260 353.6L353.9 373.9M353.9 373.9L458.6 396.4M-29.1 320.8L42 337.6M42 337.6L120.5 356.1M120.5 356.1L207.4 376.6" stroke="#86b9d1" stroke-width="1.45" fill="none" opacity="0.21"/>
<path d="M103.8 421.7L-26.3 478.4M264.3 389.9L163.5 438.4M473.5 324.9L412.4 357.6M412.4 357.6L338.5 397.1M582.3 303.7L536.2 331.6M536.2 331.6L481.5 364.6M676.7 286.3L642 310.4M782.6 253.4L760 271.8M760 271.8L734.1 292.9M1215.1 474L1410.7 509.9M877.6 446.3L1038.5 478.2M1038.5 478.2L1222.9 514.8M458.6 396.4L575.8 421.6M575.8 421.6L708.2 450.1M708.2 450.1L858.8 482.6M207.4 376.6L304.4 399.4M304.4 399.4L413.2 425M-20.9 358.5L58.9 379.3" stroke="#86b9d1" stroke-width="1.45" fill="none" opacity="0.29"/>
<path d="M163.5 438.4L35.7 499.7M338.5 397.1L247.3 445.9M481.5 364.6L415.6 404.4M642 310.4L601.4 338.5M601.4 338.5L553.3 371.8M734.1 292.9L704.2 317.3M834.7 259.7L815.7 278.4M815.7 278.4L794 299.8M1222.9 514.8L1436.5 557.1M858.8 482.6L1031.7 519.8M413.2 425L536.1 454M536.1 454L676 487M58.9 379.3L148 402.5M148 402.5L248 428.5M248 428.5L361.1 457.9" stroke="#86b9d1" stroke-width="1.45" fill="none" opacity="0.38"/>
<path d="M35.7 499.7L-131.4 580M247.3 445.9L132.1 507.5M415.6 404.4L334.4 453.5M553.3 371.8L495.4 412M704.2 317.3L669.2 345.7M669.2 345.7L627.8 379.4M794 299.8L769 324.4M889.3 266.3L874 285.3M1031.7 519.8L1232.2 562.9M1232.2 562.9L1467.4 613.6M676 487L836.9 524.9M836.9 524.9L1023.7 568.9M361.1 457.9L490 491.4M-10.8 405.6L80.2 432" stroke="#86b9d1" stroke-width="1.45" fill="none" opacity="0.46"/>
<path d="M132.1 507.5L-18.1 587.9M334.4 453.5L232 515.3M495.4 412L424.2 461.3M627.8 379.4L578.1 419.8M769 324.4L739.8 353.2M874 285.3L856.7 307M856.7 307L836.6 331.9M946.5 273.3L935.1 292.5M1023.7 568.9L1243.3 620.6M490 491.4L638.4 530M80.2 432L183.2 461.9M183.2 461.9L300.7 496" stroke="#86b9d1" stroke-width="1.45" fill="none" opacity="0.54"/>
<path d="M424.2 461.3L334.8 523.3M578.1 419.8L517.1 469.4M739.8 353.2L705.2 387.2M836.6 331.9L813.3 361M935.1 292.5L922.2 314.5M1006.5 280.6L999.1 300.1M1243.3 620.6L1505 682.3M638.4 530L810.9 574.9M810.9 574.9L1014.1 627.7M300.7 496L436.1 535.3M-10.1 461.8L89.1 494.4" stroke="#86b9d1" stroke-width="1.45" fill="none" opacity="0.62"/>
<path d="M232 515.3L99 595.6M705.2 387.2L663.8 427.9M813.3 361L785.7 395.3M922.2 314.5L907.3 339.8M999.1 300.1L990.7 322.4M1069.5 288.2L1066.3 308.1M1279.4 313.7L1289.3 334.4M436.1 535.3L593.8 581.1M89.1 494.4L202.6 531.7" stroke="#86b9d1" stroke-width="1.45" fill="none" opacity="0.71"/>
<path d="M99 595.6L-81 704.3M334.8 523.3L219 603.5M517.1 469.4L440.8 531.5M663.8 427.9L613.2 477.7M785.7 395.3L752.8 436.3M907.3 339.8L889.9 369.2M990.7 322.4L981.1 348M1066.3 308.1L1062.6 330.6M1135.9 296.2L1136.9 316.4M1205.7 304.7L1211.1 325.2M1211.1 325.2L1217.2 348.4M1289.3 334.4L1300.5 357.9M1014.1 627.7L1256.8 690.9M593.8 581.1L779.7 635.1M202.6 531.7L333.9 574.8" stroke="#86b9d1" stroke-width="1.45" fill="none" opacity="0.79"/>
<path d="M613.2 477.7L550 540M889.9 369.2L869.5 403.8M981.1 348L969.9 377.7M1062.6 330.6L1058.4 356.5M1136.9 316.4L1138 339.3M1217.2 348.4L1224.2 374.9M1300.5 357.9L1313.3 384.8M1256.8 690.9L1551.7 767.6M779.7 635.1L1002.3 699.7M333.9 574.8L487.3 625.2" stroke="#86b9d1" stroke-width="1.45" fill="none" opacity="0.88"/>
<path d="M219 603.5L63.2 711.6M63.2 711.6L-157.8 864.8M440.8 531.5L342.3 611.6M342.3 611.6L210.3 719M210.3 719L24.4 870.2M550 540L468.7 619.9M468.7 619.9L360.4 726.5M360.4 726.5L208.9 875.6M752.8 436.3L712.6 486.4M712.6 486.4L662.6 548.7M662.6 548.7L598.5 628.5M598.5 628.5L513.6 734.2M513.6 734.2L395.6 881.1M869.5 403.8L845.1 445.1M845.1 445.1L815.5 495.3M815.5 495.3L778.7 557.7M778.7 557.7L731.8 637.2M731.8 637.2L670 742.1M670 742.1L584.7 886.7M969.9 377.7L956.8 412.6M956.8 412.6L941.1 454.2M941.1 454.2L922.1 504.6M922.1 504.6L898.6 567M898.6 567L868.8 646.3M868.8 646.3L829.7 750.2M829.7 750.2L776.1 892.4M1058.4 356.5L1053.5 386.5M1053.5 386.5L1047.7 421.7M1047.7 421.7L1040.9 463.6M1040.9 463.6L1032.6 514.2M1032.6 514.2L1022.4 576.6M1022.4 576.6L1009.6 655.5M1009.6 655.5L992.8 758.4M992.8 758.4L969.9 898.1M1138 339.3L1139.3 365.5M1139.3 365.5L1140.8 395.8M1140.8 395.8L1142.6 431.3M1142.6 431.3L1144.7 473.4M1144.7 473.4L1147.2 524.2M1147.2 524.2L1150.4 586.6M1150.4 586.6L1154.3 665M1154.3 665L1159.4 766.8M1159.4 766.8L1166.2 904M1224.2 374.9L1232.3 405.6M1232.3 405.6L1241.7 441.3M1241.7 441.3L1252.8 483.7M1252.8 483.7L1266.2 534.5M1266.2 534.5L1282.6 596.8M1282.6 596.8L1303.1 674.8M1303.1 674.8L1329.6 775.3M1329.6 775.3L1365 909.8M1313.3 384.8L1328.1 415.7M1328.1 415.7L1345.2 451.8M1002.3 699.7L1273.6 778.4M1273.6 778.4L1611.4 876.5M487.3 625.2L669.1 685M669.1 685L888 756.9M888 756.9L1156.5 845M1156.5 845L1493.6 955.8M-41 523.2L57.8 560.6M57.8 560.6L171.2 603.5M171.2 603.5L302.6 653.2M302.6 653.2L456.8 711.5M456.8 711.5L640.2 780.8M640.2 780.8L862 864.7M862 864.7L1135.5 968.2M-7.9 635L101.2 683.6M101.2 683.6L227.9 740.1M227.9 740.1L376.7 806.4M376.7 806.4L553.8 885.3M-19.6 771L95.8 833.6M95.8 833.6L231 906.9" stroke="#86b9d1" stroke-width="1.45" fill="none" opacity="0.96"/>
  <polyline points="0,315.2 367,206 1328,322.5" fill="none" stroke="#c3dce8" stroke-width="4.5" stroke-linejoin="round" opacity="0.9"/>
  <polyline points="0,310.6 367,201.4 1328,318" fill="none" stroke="#f8f8f8" stroke-width="1.2" stroke-linejoin="round"/>
  <polyline points="0,312.2 367,203 1328,319.5" fill="none" stroke="#86b9d3" stroke-width="1.6" stroke-linejoin="round"/>
  <!-- green box -->
  <polygon points="190.4,78 1054.6,78 949.7,711 859,866 336.6,866" fill="rgb(130,210,160)" fill-opacity="0.24"/>
  <polygon points="74.5,78 190.4,78 336.6,866 259.3,866" fill="rgb(130,210,160)" fill-opacity="0.64"/>
  <polyline points="1054.6,70 949.7,711 859,866 850,882" fill="none" stroke="rgb(130,210,160)" stroke-opacity="0.68" stroke-width="7"/>
  <!-- cylinder shadow -->
  <path d="M846.5,583.2 L844.7,586.8 L842.8,590.4 L840.6,594.0 L838.2,597.5 L835.6,601.1 L832.7,604.6 L829.7,608.1 L826.4,611.6 L822.9,615.0 L819.1,618.4 L815.2,621.7 L811.0,625.0 L806.6,628.2 L802.0,631.4 L797.1,634.5 L792.0,637.5 L786.8,640.4 L781.3,643.3 L775.6,646.1 L769.7,648.8 L763.6,651.4 L757.3,654.0 L750.9,656.4 L744.2,658.7 L737.4,660.9 L730.4,663.0 L723.2,665.0 L715.9,666.9 L708.5,668.7 L700.9,670.3 L693.1,671.8 L685.3,673.2 L677.3,674.4 L669.3,675.5 L661.1,676.5 L652.9,677.3 L644.6,678.0 L636.3,678.5 L627.9,678.9 L619.4,679.2 L611.0,679.3 L602.5,679.3 L594.0,679.1 L585.5,678.8 L577.0,678.3 L568.6,677.7 L560.2,677.0 L551.8,676.1 L543.5,675.1 L535.3,673.9 L527.1,672.6 L519.1,671.2 L511.1,669.6 L503.3,668.0 L495.6,666.2 L488.0,664.2 L480.5,662.2 L473.2,660.1 L466.0,657.8 L459.0,655.4 L452.2,653.0 L445.5,650.4 L439.0,647.7 L432.7,645.0 L426.6,642.2 L420.7,639.3 L414.9,636.3 L409.4,633.2 L404.1,630.1 L399.0,626.9 L394.0,623.6 L389.4,620.3 L384.9,617.0 L380.6,613.6 L376.6,610.2 L372.7,606.7 L369.1,603.2 L365.7,599.7 L362.6,596.1 L359.6,592.5 L356.9,588.9 L354.3,585.3 L352.0,581.7 L349.9,578.1 L348.0,574.5 L346.3,570.8 L344.9,567.2 L343.6,563.6 L342.5,560.0 L341.6,556.4 L341.0,552.8 L340.5,549.3 L340.2,545.8 L340.0,542.2 L340.1,538.8 L340.4,535.3 L340.8,531.9 L341.4,528.5 L342.1,525.1 L343.1,521.8 L344.1,518.5 L345.4,515.3 L346.8,512.1 L348.3,508.9 L350.0,505.8 L351.9,502.7 L353.8,499.7 L355.9,496.7 L358.2,493.7 L360.6,490.8 L363.1,488.0 L365.7,485.2 L368.4,482.5 L371.2,479.8 L374.2,477.1 L377.3,474.6 L380.4,472.0 L383.7,469.6 L387.1,467.1 L390.6,464.8 L394.1,462.5 L397.8,460.2 L401.5,458.0 L405.3,455.9 L409.2,453.8 L413.2,451.7 L417.2,449.8 L421.3,447.9 L425.5,446.0 L429.8,444.2 L434.1,442.4 L438.5,440.7 L442.9,439.1 L447.4,437.5 L452.0,436.0 L456.6,434.6 L461.2,433.2 L465.9,431.8 L470.7,430.5 L475.5,429.3 L480.3,428.1 L485.2,427.0 L490.1,425.9 L495.1,424.9 L500.0,424.0 L505.1,423.1 L510.1,422.2 L515.2,421.5 L520.3,420.7 L525.4,420.1 L530.6,419.5 L535.7,418.9 L540.9,418.4 L546.1,418.0 L551.4,417.6 L556.6,417.3 L561.9,417.0 L567.1,416.8 L572.4,416.6 L577.7,416.5 L583.0,416.5 L588.3,416.5 L593.6,416.6 L598.9,416.7 L604.2,416.9 L609.5,417.1 L614.9,417.4 L620.2,417.8 L625.5,418.2 L630.7,418.6 L636.0,419.1 L641.3,419.7 L646.6,420.3 L651.8,421.0 L657.0,421.8 L662.2,422.6 L667.4,423.4 L672.6,424.4 L677.7,425.3 L682.9,426.4 L688.0,427.4 L693.0,428.6 L698.1,429.8 L703.1,431.0 L708.0,432.3 L713.0,433.7 L717.9,435.1 L722.7,436.6 L727.5,438.2 L732.3,439.8 L737.0,441.4 L741.7,443.1 L746.3,444.9 L750.9,446.7 L755.4,448.6 L759.8,450.6 L764.2,452.6 L768.5,454.6 L772.7,456.7 L776.9,458.9 L781.0,461.1 L785.0,463.4 L789.0,465.7 L792.8,468.1 L796.6,470.6 L800.3,473.1 L803.9,475.6 L807.4,478.2 L810.8,480.9 L814.1,483.6 L817.3,486.3 L820.3,489.1 L823.3,492.0 L826.1,494.9 L828.9,497.9 L831.5,500.9 L833.9,503.9 L836.3,507.0 L838.5,510.2 L840.6,513.4 L842.5,516.6 L844.2,519.8 L845.9,523.1 L847.3,526.5 L848.6,529.9 L849.8,533.3 L850.8,536.7 L851.6,540.2 L852.2,543.7 L852.6,547.2 L852.9,550.7 L853.0,554.3 L852.9,557.9 L852.6,561.5 L852.1,565.1 L851.4,568.7 L850.5,572.3 L849.3,575.9 L848.0,579.6 Z" fill="rgba(30,60,60,0.5)" filter="url(#blur8)" transform="translate(-9,9)"/>
  <!-- cylinder -->
  <path d="M323.1,392.2 L323.1,389.4 L323.3,386.6 L323.7,383.9 L324.2,381.2 L325.0,378.5 L325.9,375.9 L327.0,373.3 L328.3,370.7 L329.7,368.1 L331.4,365.6 L333.1,363.1 L335.0,360.7 L337.1,358.3 L339.3,355.9 L341.7,353.6 L344.2,351.3 L346.8,349.1 L349.6,346.8 L352.5,344.7 L355.5,342.5 L358.7,340.5 L361.9,338.4 L365.3,336.4 L368.7,334.5 L372.3,332.5 L376.0,330.7 L379.8,328.8 L383.6,327.1 L387.6,325.3 L391.6,323.6 L395.8,322.0 L400.0,320.4 L404.3,318.8 L408.7,317.3 L413.1,315.8 L417.6,314.4 L422.2,313.0 L426.8,311.6 L431.6,310.4 L436.3,309.1 L441.2,307.9 L446.0,306.7 L451.0,305.6 L456.0,304.5 L461.0,303.5 L466.1,302.5 L471.2,301.6 L476.4,300.7 L481.6,299.8 L486.9,299.0 L492.1,298.2 L497.5,297.5 L502.8,296.8 L508.2,296.2 L513.6,295.6 L519.1,295.1 L524.5,294.5 L530.0,294.1 L535.5,293.7 L541.1,293.3 L546.6,293.0 L552.2,292.7 L557.8,292.4 L563.4,292.2 L569.0,292.0 L574.6,291.9 L580.2,291.8 L585.9,291.8 L591.5,291.8 L597.2,291.9 L602.8,292.0 L608.5,292.1 L614.1,292.3 L619.8,292.5 L625.4,292.8 L631.1,293.1 L636.7,293.4 L642.4,293.8 L648.0,294.3 L653.6,294.7 L659.2,295.3 L664.8,295.8 L670.4,296.5 L675.9,297.1 L681.4,297.8 L686.9,298.5 L692.4,299.3 L697.9,300.2 L703.3,301.0 L708.7,302.0 L714.1,302.9 L719.4,303.9 L724.7,305.0 L730.0,306.1 L735.2,307.2 L740.4,308.4 L745.6,309.6 L750.7,310.9 L755.7,312.2 L760.7,313.5 L765.6,314.9 L770.5,316.4 L775.3,317.9 L780.1,319.4 L784.8,321.0 L789.4,322.6 L794.0,324.3 L798.4,326.0 L802.8,327.8 L807.2,329.6 L811.4,331.4 L815.6,333.3 L819.6,335.2 L823.6,337.2 L827.5,339.2 L831.2,341.3 L834.9,343.4 L838.4,345.6 L841.9,347.7 L845.2,350.0 L848.4,352.2 L851.5,354.5 L854.4,356.9 L857.2,359.3 L859.9,361.7 L862.4,364.1 L864.8,366.6 L867.1,369.2 L869.1,371.7 L871.0,374.3 L872.8,377.0 L874.4,379.6 L875.8,382.3 L877.0,385.0 L878.1,387.7 L878.9,390.5 L879.6,393.3 L880.1,396.1 L880.3,398.9 L880.4,401.8 L880.3,404.6 L879.9,407.5 L852.1,565.1 L851.4,568.7 L850.5,572.3 L849.3,575.9 L848.0,579.6 L846.5,583.2 L844.7,586.8 L842.8,590.4 L840.6,594.0 L838.2,597.5 L835.6,601.1 L832.7,604.6 L829.7,608.1 L826.4,611.6 L822.9,615.0 L819.1,618.4 L815.2,621.7 L811.0,625.0 L806.6,628.2 L802.0,631.4 L797.1,634.5 L792.0,637.5 L786.8,640.4 L781.3,643.3 L775.6,646.1 L769.7,648.8 L763.6,651.4 L757.3,654.0 L750.9,656.4 L744.2,658.7 L737.4,660.9 L730.4,663.0 L723.2,665.0 L715.9,666.9 L708.5,668.7 L700.9,670.3 L693.1,671.8 L685.3,673.2 L677.3,674.4 L669.3,675.5 L661.1,676.5 L652.9,677.3 L644.6,678.0 L636.3,678.5 L627.9,678.9 L619.4,679.2 L611.0,679.3 L602.5,679.3 L594.0,679.1 L585.5,678.8 L577.0,678.3 L568.6,677.7 L560.2,677.0 L551.8,676.1 L543.5,675.1 L535.3,673.9 L527.1,672.6 L519.1,671.2 L511.1,669.6 L503.3,668.0 L495.6,666.2 L488.0,664.2 L480.5,662.2 L473.2,660.1 L466.0,657.8 L459.0,655.4 L452.2,653.0 L445.5,650.4 L439.0,647.7 L432.7,645.0 L426.6,642.2 L420.7,639.3 L414.9,636.3 L409.4,633.2 L404.1,630.1 L399.0,626.9 L394.0,623.6 L389.4,620.3 L384.9,617.0 L380.6,613.6 L376.6,610.2 L372.7,606.7 L369.1,603.2 L365.7,599.7 L362.6,596.1 L359.6,592.5 L356.9,588.9 L354.3,585.3 L352.0,581.7 L349.9,578.1 L348.0,574.5 L346.3,570.8 L344.9,567.2 L343.6,563.6 L342.5,560.0 L341.6,556.4 L341.0,552.8 L340.5,549.3 L323.3,395.0 Z" fill="#444a2c"/>
  <g clip-path="url(#cylclip)">
    <path d="M293.1,389.5 L323.1,389.5 L323.1,392.3 L323.3,395.2 L323.7,398.4 L324.4,401.8 L325.2,405.4 L326.2,409.3 L327.5,413.3 L329.0,417.5 L330.7,422.0 L332.7,426.7 L334.9,429.9 L337.3,432.8 L339.9,435.7 L342.8,438.7 L346.0,441.6 L349.3,444.5 L352.9,447.3 L356.8,450.2 L360.9,453.1 L365.2,455.9 L369.8,458.7 L374.7,461.4 L379.7,464.2 L385.1,466.9 L390.6,469.5 L396.4,472.1 L402.4,474.7 L408.7,477.2 L415.1,479.6 L421.8,482.0 L428.7,484.3 L435.9,486.5 L443.2,488.7 L450.7,490.8 L458.4,492.8 L466.3,494.8 L474.4,496.6 L482.6,498.4 L491.0,500.0 L499.5,501.6 L508.2,503.1 L517.0,504.5 L525.9,505.7 L534.9,506.9 L544.0,507.9 L553.2,508.9 L562.4,509.7 L571.8,510.4 L581.1,511.0 L590.5,511.5 L599.9,511.9 L609.3,512.1 L618.7,512.2 L628.1,512.2 L637.5,512.1 L646.8,511.9 L656.0,511.5 L665.2,511.1 L674.3,510.5 L683.3,509.8 L692.2,509.0 L701.0,508.1 L709.6,507.0 L718.1,505.9 L726.5,504.6 L734.7,503.3 L742.7,501.8 L750.6,500.3 L758.2,498.6 L765.7,496.9 L772.9,495.1 L780.0,493.2 L786.8,491.2 L793.5,489.1 L799.8,487.0 L806.0,484.8 L811.9,482.5 L817.6,480.1 L823.1,477.7 L828.3,475.3 L833.2,472.7 L837.9,470.2 L842.3,467.6 L846.5,464.9 L850.5,462.0 L854.2,457.5 L857.6,453.0 L860.8,448.6 L863.7,444.4 L866.4,440.2 L868.9,436.1 L871.1,432.2 L873.0,428.3 L874.8,424.6 L876.2,420.9 L877.5,417.4 L878.5,414.0 L879.3,410.7 L879.9,407.5 L880.3,404.6 L880.4,401.8 L910.4,401.8 L910.4,760.0 L293.1,760.0 Z" fill="url(#sideg)" filter="url(#blur3)"/>
  </g>
  <!-- scribble shadow -->
  <ellipse cx="822" cy="692" rx="40" ry="20" fill="rgba(40,60,60,0.5)" filter="url(#blur8)"/>
  <!-- lighter rim region right of dashed box -->
  <path d="M878,425 L790,502 L779,663 L800,640 L822,600 L832,555 L830,520 L840,480 L855,455 Z" fill="#50553a" opacity="0.35"/>
  <!-- brown wedge -->
  <path d="M875,430 C867,438 857,448 849,458 C842,467 837,478 834,490 L832.4,507 C834,496 836,489 839.3,482.8 C843,474 847,467 851.5,462 C858,452 866,441 875,430 Z" fill="#583e26"/>
  <!-- outer silhouette glow (lower-left and right) -->
  <path d="M874,430 L923,439.5 Q925.5,441 924.5,448 C921,452 910,460 904,467 C899,474 895,484 893,495 C890,515 889,535 888,550 C888,575 884,595 880,605 C874,622 868,634 863,643 C855,656 845,668 833,680 L779,662 L782,655 C790,648 797,640 802.5,634 C810,624 817,612 821,601 C824,592 826,588 827,585"
    fill="none" stroke="#38c0f0" stroke-width="5" stroke-linejoin="round"/>
  <path id="scrib" d="M874,430 L923,439.5 Q925.5,441 924.5,448 C921,452 910,460 904,467 C899,474 895,484 893,495 C890,515 889,535 888,550 C888,575 884,595 880,605 C874,622 868,634 863,643 C855,656 845,668 833,680 L779,662 L782,655 C790,648 797,640 802.5,634 C810,624 817,612 821,601 C826,588 830,572 832,558 C832,550 830,545 830,538 C830,520 833,506 834,500 C837,485 843,472 851.5,462 C858,452 866,440 874,430 Z"
    fill="url(#scribg)"/>
  <!-- side face -->
  <path d="M923,439.5 Q925.5,441 924.5,448 C921,452 910,460 904,467 C899,474 895,484 893,495 C890,515 889,535 888,550 C888,575 884,595 880,605 C874,622 868,634 863,643 C855,656 845,668 833,680 L834,671 C845,662 856,650 862,638 C868,626 873,612 875,600 C880,580 882,565 882,548 C883,530 885,515 887,500 C889,485 893,472 898,463 C905,452 914,446 923,439.5 Z" fill="#7aa0b8"/>

  <path d="M874,430 L923,439.5 Q925.5,441 924.5,448 C921,452 910,460 904,467 C899,474 895,484 893,495 C890,515 889,535 888,550 C888,575 884,595 880,605 C874,622 868,634 863,643 C855,656 845,668 833,680 L779,662" fill="none" stroke="#1a1f26" stroke-width="1.8" stroke-linejoin="round"/>
  <path d="M923,439.5 C914,446 905,452 898,463 C893,472 889,485 887,500 C885,515 883,530 882,548 C882,565 880,580 875,600 C873,612 868,626 862,638 C856,650 845,662 834,671 L833,680" fill="none" stroke="#1a1f26" stroke-width="1.6"/>
  <path d="M779,662 L782,655 C790,648 797,640 802.5,634 C810,624 817,612 821,601 C826,588 830,572 832,558 C832,550 830,545 830,538 C830,520 833,506 834,500 C837,485 843,472 851.5,462 C858,452 866,440 874,430" fill="none" stroke="#1f3a48" stroke-width="1.1" opacity="0.75"/>
  <!-- bounding dashed lines -->
  <path d="M878,425 L790,502 L779,663" fill="none" stroke="#111" stroke-width="2"/>
  <path d="M878,425 L790,502 L779,663" fill="none" stroke="#48b8dc" stroke-width="2" stroke-dasharray="3 4"/>
  <path d="M877,432 L870,500 L862,569" fill="none" stroke="#4f5b66" stroke-width="1.1" stroke-dasharray="6 5" opacity="0.85"/>
  <path d="M862,569 L779,663" fill="none" stroke="#4a5a66" stroke-width="1" stroke-dasharray="6 4" opacity="0.8"/>
  <path d="M830,540 L882,554" fill="none" stroke="#1a1a1a" stroke-width="1.6" stroke-dasharray="6 4"/>
  <!-- handles -->
  <g fill="#f2f2f2" stroke="#333" stroke-width="1.6">
    <rect x="874.5" y="420.5" width="8" height="8"/>
    <rect x="786" y="498" width="8" height="8"/>
    <rect x="774.5" y="659.5" width="8" height="8"/>
    <rect x="878" y="549.5" width="8" height="8"/>
    <rect x="858.5" y="564.5" width="8" height="8"/>
  </g>
  <g fill="#2b2b2b">
    <rect x="834.5" y="457.5" width="6" height="6"/>
    <rect x="867.5" y="496.5" width="6" height="6"/>
    <rect x="781" y="583" width="6" height="6"/>
    <rect x="821" y="610" width="6" height="6"/>
  </g>
  <path d="M818,628 C820,632 821,636 818,640 C816,642 814,640 815,637" fill="none" stroke="#333" stroke-width="1.2"/>
  <!-- rotate arrows -->
  <path d="M909,479 L916,478.5 C921,477.5 922,472 916,470.5" fill="none" stroke="#666" stroke-width="1.3"/>
  <path d="M906.5,479.5 L911,476.5 L911,482 Z" fill="#666"/>
  <path d="M939,510 C946,514 948,521 940,527" fill="none" stroke="#666" stroke-width="1.6"/>
  <path d="M936,507 L943,508 L939,514 Z M936,529 L943,528 L940,522 Z" fill="#666"/>
  <path d="M926.8,563.6 L938.8,569.6 L926.8,571 Z" fill="#252525"/>

</g>
</svg>


<div id="topbar">
  <div class="abs" style="left:1304px;top:0;width:4px;height:40px;background:#f0f0ee"></div>
  <div class="abs" style="left:1308px;top:0;width:39px;height:40px;background:#5b88c8"></div>
  <svg class="abs" style="left:1308px;top:0" width="232" height="40" viewBox="1308 0 232 40">
    <g fill="#fbfbfd">
      <rect x="1318" y="11" width="5.5" height="5.5"/><rect x="1325" y="11" width="5.5" height="5.5"/><rect x="1332" y="11" width="5.5" height="5.5"/>
      <rect x="1318" y="18" width="5.5" height="5.5"/><rect x="1325" y="18" width="5.5" height="5.5"/><rect x="1332" y="18" width="5.5" height="5.5"/>
      <rect x="1318" y="25" width="5.5" height="5.5"/><rect x="1325" y="25" width="5.5" height="5.5"/><rect x="1332" y="25" width="5.5" height="5.5"/>
    </g>
    <rect x="1347" y="0" width="193" height="40" fill="#efefef"/>
    <g fill="#dcdcdf"><rect x="1386" y="0" width="1" height="40"/><rect x="1426" y="0" width="1" height="40"/><rect x="1465" y="0" width="1" height="40"/><rect x="1505" y="0" width="1" height="40"/></g>
    <!-- apple -->
    <g fill="none" stroke="#1d2733" stroke-width="2" stroke-linecap="round">
      <path d="M1362,17.5 C1358.5,20 1357.5,25 1359,28.5 C1361,32 1366,33.5 1370.5,32.3 C1373,31.5 1373.5,30 1375,29 C1377.5,27 1377.5,22 1376,19 C1374,15.5 1370.5,14.5 1367,15 C1365,15.2 1363.5,16.3 1362,17.5 Z"/>
      <path d="M1367,7.5 L1367,11.5 M1371.3,7.8 L1371.3,12.3 M1375.5,10.8 L1375.5,16"/>
      <path d="M1368.3,19.5 L1371,22" stroke-width="1.4"/>
      <path d="M1357.8,17.3 L1361.5,17.3" stroke-width="1.2"/>
    </g>
    <ellipse cx="1361" cy="13.8" rx="1.7" ry="3.6" transform="rotate(15 1361 13.8)" fill="#1d2733"/>
    <!-- pickaxe -->
    <g fill="#1d2733">
      <rect x="1399.4" y="9.4" width="7.2" height="1.8"/>
      <rect x="1397.3" y="10.9" width="2.2" height="2.1"/>
      <rect x="1399.4" y="12.9" width="5.1" height="1.8"/>
      <rect x="1404.5" y="14.5" width="2.6" height="2.1"/>
      <rect x="1406.6" y="10.9" width="3.7" height="1.8"/>
      <rect x="1410.5" y="13.2" width="3.9" height="3.4"/>
      <rect x="1414.4" y="17" width="2.2" height="3.4"/>
      <rect x="1416.8" y="20.6" width="1.9" height="8.5"/>
      <rect x="1412.9" y="22.2" width="2.1" height="6.5"/>
      <rect x="1414.8" y="28.8" width="2.2" height="1.9"/>
      <rect x="1407" y="17.6" width="3.8" height="4.2"/>
      <rect x="1395.2" y="29.6" width="2" height="3.1"/>
      <rect x="1395.2" y="31" width="3.6" height="1.7"/>
    </g>
    <path d="M1397.5,29.5 L1407.5,19.5" stroke="#1d2733" stroke-width="2.6" stroke-dasharray="1.8 1.3"/>
    <path d="M1399.3,31.3 L1409.3,21.3" stroke="#1d2733" stroke-width="2.4" stroke-dasharray="1.3 1.8"/>
    <!-- brick -->
    <g fill="#2d3b4b"><rect x="1436" y="16.5" width="20" height="12"/><rect x="1439" y="13" width="5.5" height="4"/><rect x="1447.5" y="13" width="5.5" height="4"/></g>
    <!-- person plus -->
    <g fill="none" stroke="#4a5563" stroke-width="1.4"><circle cx="1485.5" cy="15.6" r="5.2"/><path d="M1477.5,32.5 L1477.5,29 C1477.5,24 1481,21.5 1485.5,21.5 C1489,21.5 1491.5,23 1492.5,25.5 M1477.5,32.5 L1489,32.5"/></g>
    <circle cx="1496.8" cy="32" r="5.3" fill="#1d2a36"/>
    <path d="M1496.8,29 L1496.8,35 M1493.8,32 L1499.8,32" stroke="#fff" stroke-width="1.5"/>
    <!-- avatar -->
    <circle cx="1524" cy="20.5" r="17.3" fill="#4e7fcf"/>
    <circle cx="1524.5" cy="17.3" r="7.7" fill="#e4e6ec"/>
    <path d="M1514.5,37 C1514,30 1518,26.5 1524.5,26.5 C1531,26.5 1535,30 1534.5,37 Z" fill="#e4e6ec"/>
  </svg>
</div>
<div id="toolbar">
  <svg class="abs" style="left:0;top:0" width="1540" height="37" viewBox="0 41 1540 37">
    <g fill="#d7d7da"><rect x="959" y="41" width="1" height="37"/><rect x="1016" y="41" width="1" height="37"/><rect x="1131" y="41" width="1" height="37"/><rect x="1245" y="41" width="1" height="37"/><rect x="1322" y="41" width="1" height="37"/><rect x="993" y="50" width="1" height="20"/></g>
    <!-- bulb -->
    <g fill="none" stroke="#b9c1c9" stroke-width="1.6">
      <path d="M972.5,63 C970,60 969,57.5 969,55.5 C969,51.5 972,48.8 976.3,48.8 C980.6,48.8 983.6,51.5 983.6,55.5 C983.6,57.5 982.6,60 980.1,63 L980.1,65 L972.5,65 Z"/>
      <path d="M973,67 L979.6,67 M973.8,69.2 L978.8,69.2"/>
    </g>
    <path d="M1000.6,55.4 L1008,55.4 L1004.3,60.4 Z" fill="#111"/>
    <!-- group -->
    <g fill="#bcc7d1">
      <rect x="1029" y="52" width="10" height="9"/>
    </g>
    <g fill="none" stroke="#bcc7d1" stroke-width="1.5">
      <circle cx="1039.5" cy="62" r="5"/>
      <path d="M1026,49 L1026,69 M1047,49 L1047,69 M1029,48.5 L1044,48.5 M1029,69.5 L1044,69.5" stroke-dasharray="2 1.5"/>
    </g>
    <!-- icon2 -->
    <g fill="#bcc7d1"><rect x="1065" y="49" width="12" height="12"/><circle cx="1077" cy="62" r="7.5"/></g>
    <!-- icon3 -->
    <rect x="1101" y="48.5" width="9" height="9" fill="#bcc7d1"/>
    <g fill="none" stroke="#bcc7d1" stroke-width="1.5"><circle cx="1116.5" cy="64" r="5"/><path d="M1113,50 L1113.5,52 M1117,51 L1116,53 M1121,55 L1119,56 M1102,61 L1104.5,60.5 M1104,66 L1106,64.5 M1107,70 L1108,67.5"/></g>
    <!-- align -->
    <g fill="none" stroke="#bfc8d0" stroke-width="1.5"><path d="M1144,48.5 L1144,69.5"/><rect x="1148" y="52" width="10" height="5"/><rect x="1148" y="60" width="7.5" height="5"/></g>
    <!-- mirror -->
    <g fill="none" stroke="#1a1a1a" stroke-linejoin="miter"><path d="M1188.3,48 L1188.3,71" stroke-width="1.8"/><path d="M1185,52.5 L1177.5,65.8 L1185,65.8 Z" stroke-width="1.4"/><path d="M1191.8,52.5 L1199.3,65.8 L1191.8,65.8 Z" stroke-width="2"/></g>
    <!-- magnet -->
    <g transform="rotate(-22 1225 56)" fill="none" stroke="#1a1a1a">
      <path d="M1218.5,62 L1218.5,55 C1218.5,50.5 1221.5,48 1225,48 C1228.5,48 1231.5,50.5 1231.5,55 L1231.5,62" stroke-width="2.2"/>
      <path d="M1222,62 L1222,55.5 C1222,53.5 1223.3,52.3 1225,52.3 C1226.7,52.3 1228,53.5 1228,55.5 L1228,62" stroke-width="1.6"/>
      <path d="M1218.5,62.5 L1222,62.5 M1228,62.5 L1231.5,62.5" stroke-width="1.8"/>
      <path d="M1218.5,59.5 L1222,59.5 M1228,59.5 L1231.5,59.5" stroke-width="1.2"/>
    </g>
    <path d="M1215,67.5 C1220,66 1224,65.5 1228,65.3 C1232,65.5 1235,66.5 1237.5,68" fill="none" stroke="#1a1a1a" stroke-width="1.8" stroke-dasharray="1.8 1.6"/>
    <!-- workplane -->
    <g fill="none" stroke="#3a74d2" stroke-width="1.6" stroke-linejoin="round">
      <path d="M1256,54.4 L1263.6,49.9 L1267.4,58.6 L1260.8,62.7 Z"/>
      <path d="M1257,61.3 L1257.7,68.9 L1275.7,58.9 L1269.5,54.5"/>
      <path d="M1258,65.2 L1274.3,57.6" stroke-dasharray="3 2"/>
    </g>
    <!-- drop -->
    <g fill="none" stroke="#1a1a1a" stroke-width="1.7"><path d="M1303,48.5 L1303,56 M1300.2,53.2 L1303,56 L1305.8,53.2"/><path d="M1299.5,54.5 L1297.5,56 L1297.5,62.5 M1306.5,54.5 L1308.5,56 L1308.5,62.5"/><path d="M1294.5,62.5 L1294.5,68 L1311.5,68 L1311.5,62.5 Z"/></g>
    <path d="M1296,65.2 L1310,65.2" stroke="#1a1a1a" stroke-width="1.2" stroke-dasharray="2.2 1.3"/>
  </svg>
  <div class="tbtn" style="left:1332px;width:64px">Импорт</div>
  <div class="tbtn" style="left:1401px;width:64px">Экспорт</div>
  <div class="tbtn" style="left:1470px;width:66px">Отправить</div>
</div>

<div id="panel"></div>
<svg class="abs" style="left:1328px;top:78px" width="212" height="788" viewBox="1328 78 212 788">
  <defs>
    <pattern id="stripes" patternUnits="userSpaceOnUse" width="6" height="6" patternTransform="rotate(45)">
      <rect width="6" height="6" fill="#d6dae0"/><rect width="2.6" height="6" fill="#bcc2ca"/>
    </pattern>
    <pattern id="stripes2" patternUnits="userSpaceOnUse" width="7" height="7" patternTransform="rotate(45)">
      <rect width="7" height="7" fill="#c4c4c4"/><rect width="3.5" height="7" fill="#a4a4a4"/>
    </pattern>
    <filter id="sb" x="-50%" y="-50%" width="200%" height="200%"><feGaussianBlur stdDeviation="3"/></filter>
  </defs>
  <rect x="1328" y="78" width="1" height="788" fill="#dedee0"/>
  <!-- top icons -->
  <g fill="none" stroke="#3b8ac6" stroke-width="1.6">
    <path d="M1348,92 L1377,90.5 L1377,123.5 L1349,121.5 Z"/>
    <path d="M1352.5,91.8 L1353,121.8 M1357,91.6 L1357.5,122.1 M1361.5,91.4 L1362,122.4 M1366,91.2 L1366.3,122.7 M1370.5,91 L1370.8,123 M1374,90.8 L1374.2,123.3" stroke-width="0.9"/>
    <path d="M1348.3,96 L1377,95 M1348.5,100.5 L1377,99.7 M1348.6,105 L1377,104.5 M1348.8,109.5 L1377,109.2 M1348.9,114 L1377,114 M1349,118 L1377,118.5" stroke-width="0.9"/>
    <path d="M1362,91.4 L1362.2,122.4 M1348.7,107 L1377,106.8" stroke-width="1.6"/>
  </g>
  <g fill="none" stroke="#3b8ac6" stroke-width="1.7" stroke-linejoin="round">
    <path d="M1420,91 L1426,91.5 L1426,114 L1452,116 L1451.5,123.5 L1420.5,121 Z"/>
    <path d="M1420.5,97 L1423,97 M1420.5,102 L1423,102 M1420.5,107 L1423,107 M1431,117 L1431,119.5 M1437,117.5 L1437,120 M1443,118 L1443,120.5" stroke-width="1.2"/>
  </g>
  <g fill="none" stroke="#3b8ac6" stroke-width="1.7" stroke-linejoin="round">
    <path d="M1497,94 C1497,91.5 1498,90.5 1500.5,90.5 L1517,90.5 C1519.5,90.5 1520.5,91.5 1520.5,94 L1520.5,113 C1520.5,115.5 1519.5,116.5 1517,116.5 L1512,116.5 L1508.5,123 L1505,116.5 L1500.5,116.5 C1498,116.5 1497,115.5 1497,113 Z"/>
    <path d="M1502,97 L1515,97 M1502,101 L1515,101 M1502,105 L1515,105 M1502,109 L1511,109" stroke-width="1.2"/>
  </g>
  <!-- dropdown -->
  <rect x="1334.5" y="139.5" width="163" height="35" rx="2" fill="#ebebed" stroke="#dfdfe2"/>
  <rect x="1500.5" y="139.5" width="36" height="35" rx="2" fill="#ebebed" stroke="#dfdfe2"/>
  <path d="M1483.5,155 L1486.5,151.5 L1489.5,155 Z M1483.5,159 L1486.5,162.5 L1489.5,159 Z" fill="#222"/>
  <circle cx="1516" cy="156" r="6.3" fill="none" stroke="#1a1a1a" stroke-width="1.8"/>
  <path d="M1520.5,160.5 L1525,165" stroke="#1a1a1a" stroke-width="2"/>
  <!-- scrollbar -->
  <!-- tiles -->
  <g fill="#e8e8ea">
    <rect x="1334.5" y="183" width="64.5" height="72" rx="2"/>
<rect x="1403" y="183" width="64.5" height="72" rx="2"/>
<rect x="1471" y="183" width="61.5" height="72" rx="2"/>
<rect x="1334.5" y="260" width="64.5" height="72" rx="2"/>
<rect x="1403" y="260" width="64.5" height="72" rx="2"/>
<rect x="1471" y="260" width="61.5" height="72" rx="2"/>
<rect x="1334.5" y="339" width="64.5" height="72" rx="2"/>
<rect x="1403" y="339" width="64.5" height="72" rx="2"/>
<rect x="1471" y="339" width="61.5" height="72" rx="2"/>
<rect x="1334.5" y="421" width="64.5" height="72" rx="2"/>
<rect x="1403" y="421" width="64.5" height="72" rx="2"/>
<rect x="1471" y="421" width="61.5" height="72" rx="2"/>
<rect x="1334.5" y="502" width="64.5" height="72" rx="2"/>
<rect x="1403" y="502" width="64.5" height="72" rx="2"/>
<rect x="1471" y="502" width="61.5" height="72" rx="2"/>
<rect x="1334.5" y="585" width="64.5" height="72" rx="2"/>
<rect x="1403" y="585" width="64.5" height="72" rx="2"/>
<rect x="1471" y="585" width="61.5" height="72" rx="2"/>
<rect x="1334.5" y="667" width="64.5" height="72" rx="2"/>
<rect x="1403" y="667" width="64.5" height="72" rx="2"/>
<rect x="1471" y="667" width="61.5" height="72" rx="2"/>
<rect x="1334.5" y="749.5" width="64.5" height="72" rx="2"/>
<rect x="1403" y="749.5" width="64.5" height="72" rx="2"/>
<rect x="1471" y="749.5" width="61.5" height="72" rx="2"/>
  </g>
  <rect x="1533.7" y="187" width="6.3" height="679" rx="3" fill="#bdbdbf"/>
  <!-- row1 -->
  <path d="M1346,209 L1358,195 L1385.5,199.5 L1384,224 L1376.5,241 L1347.5,235 Z" fill="url(#stripes)" stroke="#6e737a" stroke-width="1.2"/>
  <path d="M1346,209 L1374.5,211.5 L1385.5,199.5 M1374.5,211.5 L1376.5,241" fill="none" stroke="#8a9098" stroke-width="0.9"/>
  <path d="M1419,205 L1419,237 A16,7.5 0 0 0 1451,237 L1451,205 Z" fill="url(#stripes)" stroke="#6e737a" stroke-width="1.2"/>
  <ellipse cx="1435" cy="204.6" rx="16" ry="7.5" fill="url(#stripes)" stroke="#6e737a" stroke-width="1.2"/>
  <path d="M1482,209 L1495.8,195 L1522.7,199.4 L1514,211.5 Z" fill="#b93330"/>
  <path d="M1482,209 L1514,211.5 L1513,241 L1483.7,235 Z" fill="#a22826"/>
  <path d="M1514,211.5 L1522.7,199.4 L1521,224.5 L1513,241 Z" fill="#8c2121"/>
  <!-- row2 -->
  <path d="M1350.5,281 L1350.5,310 A16,7 0 0 0 1382.5,310 L1382.5,281 Z" fill="#c8752e" stroke="#8a4f1c" stroke-width="0.8"/>
  <ellipse cx="1366.5" cy="280.8" rx="16" ry="7" fill="#d4843a" stroke="#8a4f1c" stroke-width="0.8"/>
  <radialGradient id="sph" cx="0.4" cy="0.35" r="0.7"><stop offset="0" stop-color="#4aa3d6"/><stop offset="1" stop-color="#2b78b0"/></radialGradient><circle cx="1434.8" cy="294.6" r="15.6" fill="url(#sph)" stroke="#2a6a98" stroke-width="0.8"/>
  <g fill="none" stroke-linecap="round" stroke-linejoin="round">
    <path d="M1491.5,309 L1491.5,298 C1491.5,290 1497,287 1499.5,294 C1501,299 1501,307 1505,301 C1508,295 1508,287 1512,289 C1515,291 1513,304 1516.5,299 L1516.5,288" stroke="#7d9cb6" stroke-width="6.5" transform="translate(0.8,2.5)"/>
    <path d="M1491.5,309 L1491.5,298 C1491.5,290 1497,287 1499.5,294 C1501,299 1501,307 1505,301 C1508,295 1508,287 1512,289 C1515,291 1513,304 1516.5,299 L1516.5,288" stroke="#aecce3" stroke-width="5"/>
  </g>
  <!-- row3 -->
  <path d="M1354,390 L1354.5,393.5 C1360,394.5 1367,393 1372,389.5 C1377.5,385 1381.5,377 1382,371 L1380.5,368 C1381,373 1377,381 1371,386 C1366,390 1359,391 1354,390 Z" fill="#7f8cbc" stroke="#5d6894" stroke-width="0.8"/>
  <path d="M1354,390 C1353,382 1356,373 1362,368 C1366,365 1371,364 1374,365 L1376.5,361.5 L1381,363.5 L1380.5,368 C1381,373 1377,381 1371,386 C1366,390 1359,391 1354,390 Z" fill="#aab8e2" stroke="#6a76a6" stroke-width="0.9"/>
  <path d="M1355,389 L1365.5,377.5" stroke="#5a6590" stroke-width="1"/><circle cx="1367" cy="375.8" r="2.6" fill="#7482b2"/>
  <path d="M1415.3,389 L1439.4,363.1 L1452.3,378.8 L1444.9,394.5 Z" fill="#4f9c42" stroke="#2c6a2a" stroke-width="0.8"/>
  <path d="M1439.4,363.1 L1452.3,378.8 L1444.9,394.5 L1431,378 Z" fill="#5fb24f"/>
  <path d="M1503.1,363.1 L1488.3,388 A14.8,5.5 0 0 0 1517.9,388 Z" fill="#7e3e9c" stroke="#55256e" stroke-width="0.8"/>
  <!-- row4 -->
  <path d="M1347,469.5 L1358,455 C1362,446 1372,443 1378,447 C1385,451 1386,460 1382,467 L1375,476.5 Z" fill="#72c0d0" stroke="#3f8696" stroke-width="1"/>
  <path d="M1347,469.5 L1375,476.5 L1382,467 C1378,470 1372,468 1368,462 Z" fill="#5aa8ba"/>
  <g transform="translate(1416,467) skewX(-10) rotate(6)">
    <text x="1" y="2" font-family="Liberation Sans" font-weight="bold" font-size="16" fill="#7e1c1c" letter-spacing="-0.5" transform="scale(1,1.1)">TEXT</text>
    <text x="0" y="0" font-family="Liberation Sans" font-weight="bold" font-size="16" fill="#c4302e" letter-spacing="-0.5" transform="scale(1,1.1)">TEXT</text>
  </g>
  <path d="M1481.9,450 L1515,455.5 L1520.7,465.7 L1513.3,482.3 L1485.6,476.8 Z" fill="#2c3e82" stroke="#1c2a5a" stroke-width="0.8"/>
  <path d="M1515,455.5 L1520.7,465.7 L1513.3,482.3 Z" fill="#24336c"/>
  <!-- row5 -->
  <path d="M1366.3,527.7 L1347.9,559 L1377.4,564.7 L1383.9,548 Z" fill="#e2c340" stroke="#8a7420" stroke-width="0.9"/>
  <path d="M1366.3,527.7 L1377.4,564.7 L1383.9,548 Z" fill="#d2b235"/>
  <path d="M1419.5,549.5 A15.6,18 0 0 1 1450.5,549.5 A15.6,6 0 0 1 1419.5,549.5 Z" fill="#d0307e" stroke="#8a1f52" stroke-width="0.6"/>
  <path d="M1488,522 L1500,518.5 L1513,520 L1520.7,528 L1519,556 L1506,562.8 L1490,558 Z" fill="#2d4492" stroke="#1b2a60" stroke-width="0.8"/>
  <path d="M1488,522 L1505,528 L1520.7,528 M1505,528 L1506,562.8" stroke="#233a80" stroke-width="0.8" fill="none"/>
  <!-- row6 -->
  <path d="M1351.6,640 C1352,622 1358,609 1366.3,609 C1374.5,609 1380.5,622 1381.1,640 C1378,645 1356,645 1351.6,640 Z" fill="#d6d6d6" stroke="#888" stroke-width="0.8"/>
  <ellipse cx="1434.7" cy="623" rx="15.7" ry="9" fill="#3190c8" stroke="#1f6898" stroke-width="0.8"/>
  <ellipse cx="1434.7" cy="622" rx="5.5" ry="2.3" fill="#ececee"/>
  <path d="M1488,622 L1488,629 A16,8 0 0 0 1520,629 L1520,622 Z" fill="#c06a26" stroke="#7a4518" stroke-width="0.8"/>
  <ellipse cx="1504" cy="622" rx="16" ry="8" fill="#d07c32" stroke="#7a4518" stroke-width="0.8"/>
  <ellipse cx="1504" cy="621" rx="7" ry="3.5" fill="#b8692a"/>
  <!-- row7 -->
  <path d="M1353,699 L1353.5,706 C1356,711 1361,715 1368,719 C1378,713 1383,708 1383.5,703 L1383,696 C1382,702 1378,707 1368,713 C1360,709 1355,705 1353,699 Z" fill="#6c4a2e" stroke="#4a3019" stroke-width="0.8"/>
  <path d="M1353,699 C1351,692 1358,688.5 1364,692.5 C1369,688.5 1380,688.5 1383,695 C1384.5,700 1381,706 1368,713 C1360,709 1355,705 1353,699 Z" fill="#8c6442" stroke="#4a3019" stroke-width="0.8"/>
  <path d="M1422,701 L1432,702 L1437,694 L1440,702 L1451,707 L1440,710 L1438,718 L1432,711 L1420,713 L1428,707 Z" fill="#5cb2d2" stroke="#2f7a98" stroke-width="0.8"/>
  <path d="M1490,697 L1500,697 L1506,690 L1508,697 L1520,702 L1520,707 L1511,710 L1509,719 L1503,713 L1492,714 L1490,710 L1496,705 Z" fill="#e0c232" stroke="#8a7418" stroke-width="0.8"/>
  <!-- row8 -->
  <path d="M1367,772 L1380,777 L1381.5,790 L1372,800 L1357,798 L1353.5,785 L1360,775 Z" fill="#d42a2a" stroke="#8a1818" stroke-width="0.8"/>
  <path d="M1367,772 L1367,786 L1381.5,790 M1367,786 L1357,798 M1367,786 L1353.5,785" stroke="#b02020" stroke-width="0.8" fill="none"/>
  <ellipse cx="1434.7" cy="786" rx="15.5" ry="9" fill="#8a6241" stroke="#5a3d22" stroke-width="0.9"/>
  <ellipse cx="1434.7" cy="784.5" rx="12.5" ry="6" fill="#e6e6e8" stroke="#5a3d22" stroke-width="0.7"/>
  <path d="M1484,782 C1484,770 1490,766 1503,766 C1516,766 1522.5,770 1522.5,780 C1522.5,795 1520,807 1505,807.3 C1490,807.3 1484,800 1484,782 Z" fill="#bdbdbd" stroke="#7a7a7a" stroke-width="1"/>
  <path d="M1490,772 C1498,768 1515,768 1520,773 C1518,781 1516,787 1517,800 C1510,792 1500,785 1490,772 Z" fill="#d8d8d8"/>
  <!-- button -->
  <rect x="1381" y="830.5" width="108" height="29.5" rx="14.7" fill="#4e7fcf"/>
</svg>
<div class="abs" style="left:1381px;top:830px;width:108px;height:30px;line-height:30px;text-align:center;color:#fff;font-size:12px;font-weight:bold">Другие формы</div>
<div class="abs" style="left:1343px;top:149px;font-size:12.5px;color:#4b5562">Основные формы</div>

<div id="insp">
  <div class="abs" style="left:0;top:0;width:202px;height:32px;background:#efefef;border-bottom:1px solid #e2e2e4"></div>
  <svg class="abs" style="left:0;top:0" width="202" height="212" viewBox="1114 88 202 212">
    <path d="M1125.5,106 L1130.8,100.5 L1136,106" fill="none" stroke="#1f2d3d" stroke-width="2"/>
    <!-- lock -->
    <rect x="1262.5" y="100" width="11" height="8" rx="1" fill="#3b4856"/>
    <path d="M1265,100 L1265,96.5 C1265,93.5 1267,92.5 1269,92.5 C1271,92.5 1273,93.5 1273,96" fill="none" stroke="#3b4856" stroke-width="1.6"/>
    <!-- bulb -->
    <path d="M1292,103 C1290,101 1289.5,99 1289.5,97.5 C1289.5,94.5 1292,92.5 1295.5,92.5 C1299,92.5 1301.5,94.5 1301.5,97.5 C1301.5,99 1301,101 1299,103 L1299,104.5 L1292,104.5 Z" fill="#a8b0b8" stroke="#5a6570" stroke-width="1.2"/>
    <path d="M1292.5,106.5 L1298.5,106.5 M1293.5,108.3 L1297.5,108.3" stroke="#5a6570" stroke-width="1.2"/>
    <!-- solid -->
    <circle cx="1173.3" cy="158.4" r="19.5" fill="#f4f4f4" stroke="#4a7dd0" stroke-width="1.5"/>
    <circle cx="1173.3" cy="158.4" r="15.8" fill="#89bcd8"/>
    <!-- hole -->
    <circle cx="1253" cy="158.4" r="19" fill="#f2f2f2" opacity="0.7"/>
    <circle cx="1253" cy="158.4" r="15.8" fill="url(#hstr)"/>
    <defs><pattern id="hstr" patternUnits="userSpaceOnUse" width="8" height="8" patternTransform="rotate(-45)"><rect width="8" height="8" fill="#c6c6c6"/><rect width="4" height="8" fill="#a2a2a2"/></pattern></defs>
    <rect x="1124" y="225" width="181" height="1" fill="#e0e0e2"/>
    <rect x="1192" y="247.5" width="65" height="1" fill="#e0e0e2"/>
    <circle cx="1192.2" cy="248.2" r="4.3" fill="#f4f4f4" stroke="#2a2a2a" stroke-width="1.3"/>
    <rect x="1124.5" y="266.5" width="182" height="23.5" rx="2" fill="#ececee" stroke="#dcdcdf"/>
  </svg>
  <div class="abs" style="left:40px;top:7px;font-size:13px;font-weight:bold;color:#34414e;letter-spacing:0.1px">Scribble</div>
  <div class="lbl" style="left:39px;top:96px;width:40px;text-align:center">Тело</div>
  <div class="lbl" style="left:109px;top:96px;width:60px;text-align:center">Отверстие</div>
  <div class="lbl" style="left:10px;top:153px;font-size:10px">Высота</div>
  <div class="lbl" style="left:174px;top:155px;font-size:9px">10</div>
  <div class="lbl" style="left:10px;top:183px;width:182px;text-align:center;font-size:10px">Редактировать рукописный текст</div>
</div>
<div class="abs" style="left:1222px;top:820px;width:95px;height:16px;background:rgba(238,238,240,0.75);border:1px solid rgba(220,220,224,0.8);border-radius:2px;font-size:10.5px;color:#6b7178;text-align:center;line-height:14px">Параметры</div>
<div class="abs" style="left:1114px;top:847px;font-size:10px;color:#4d5966;white-space:nowrap">Сетка Шаговой Привязки</div>
<div class="abs" style="left:1238px;top:847px;width:79px;height:15px;background:rgba(238,238,240,0.8);border:1px solid rgba(220,220,224,0.9);border-radius:2px;font-size:10.5px;color:#6b7178;line-height:13px;padding-left:5px">1,0 мм</div>
<svg class="abs" style="left:1304px;top:850px" width="8" height="8"><path d="M1,6 L4,2.5 L7,6 Z" fill="#222"/></svg>
<div class="abs" style="left:1318px;top:456px;width:15px;height:34px;background:rgba(238,238,240,0.6);border:1px solid rgba(225,225,228,0.8)"></div>
<svg class="abs" style="left:1318px;top:456px" width="15" height="34"><path d="M5,10 L9.5,17 L5,24" fill="none" stroke="#111" stroke-width="1.6"/></svg>

</body></html>
